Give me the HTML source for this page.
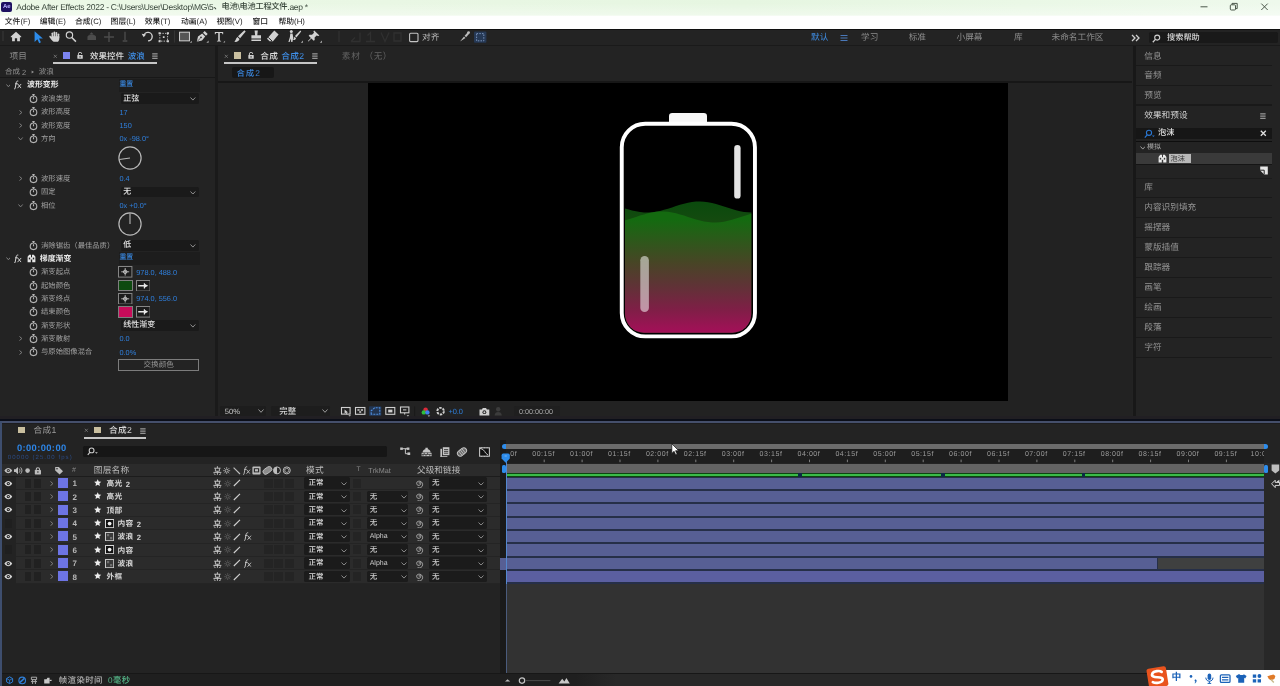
<!DOCTYPE html>
<html lang="zh"><head><meta charset="utf-8"><title>Adobe After Effects 2022</title><style>html,body{margin:0;padding:0}body{width:1280px;height:686px;overflow:hidden;position:relative;background:#232323;font-family:"Liberation Sans","Noto Sans CJK SC",sans-serif;font-size:8.67px}#app{position:absolute;left:0;top:0;width:1280px;height:686px;will-change:transform}.a{position:absolute;display:block}.t{position:absolute;display:block;white-space:pre;font-kerning:none;text-rendering:geometricPrecision}.m{font-weight:500}.b{font-weight:bold}</style></head>
<body>
<div id="app">
<div class="a" style="left:0px;top:0px;width:1280px;height:16px;background:linear-gradient(to right,#ebf8e6 0%,#e9f7e4 30%,#e6f6e1 58%,#eaf8e6 80%,#eef9ec 100%);"></div>
<div class="a" style="left:0px;top:0px;width:1280px;height:16px;background:linear-gradient(to bottom,rgba(255,255,255,0) 20%,rgba(255,255,255,0.35) 92%,rgba(255,255,255,0.7) 100%);"></div>
<div class="a" style="left:0px;top:16px;width:1280px;height:13px;background:#ffffff;"></div>
<div class="a" style="left:1.2px;top:2.1px;width:10.6px;height:10px;background:#1d1060;border-radius:2px"></div>
<span class="t" style="left:3.1px;top:4.17px;font-size:6px;color:#b9b4ff;line-height:6px;font-weight:bold;letter-spacing:-0.25px;">Ae</span>
<span class="t" style="left:16.3px;top:2.38px;font-size:8.5px;color:#38463a;line-height:10px;letter-spacing:-0.28px;">Adobe After Effects 2022 - C:\Users\User\Desktop\MG\5</span>
<span class="t m" style="left:213.57px;top:3.1px;font-size:8.24px;line-height:8.24px;color:#38463a;letter-spacing:-0.28px;">、电池</span>
<span class="t" style="left:237.46px;top:2.38px;font-size:8.5px;color:#38463a;line-height:10px;letter-spacing:-0.28px;">\</span>
<span class="t m" style="left:239.55px;top:3.1px;font-size:8.24px;line-height:8.24px;color:#38463a;letter-spacing:-0.28px;">电池工程文件</span>
<span class="t" style="left:287.34px;top:2.38px;font-size:8.5px;color:#38463a;line-height:10px;letter-spacing:-0.28px;">.aep *</span>
<svg class="a" style="left:1196px;top:0px;" width="80" height="15" viewBox="0 0 80 15"><g stroke="#4b574b" stroke-width="1" fill="none"><path d="M4.5 6.8h7"/><rect x="34.3" y="4.8" width="5.2" height="5.2" rx="1"/><path d="M36 4.8v-1.4h5.2v5.2h-1.6"/><path d="M65.3 3.6l6.4 6.4M71.7 3.6l-6.4 6.4"/></g></svg>
<span class="t m" style="left:4.8px;top:17.62px;font-size:7.8px;line-height:7.8px;color:#1c1c1c;">文件</span>
<span class="t" style="left:20.4px;top:17.42px;font-size:7.8px;color:#1c1c1c;line-height:9px;">(F)</span>
<span class="t m" style="left:39.8px;top:17.62px;font-size:7.8px;line-height:7.8px;color:#1c1c1c;">编辑</span>
<span class="t" style="left:55.4px;top:17.42px;font-size:7.8px;color:#1c1c1c;line-height:9px;">(E)</span>
<span class="t m" style="left:75px;top:17.62px;font-size:7.8px;line-height:7.8px;color:#1c1c1c;">合成</span>
<span class="t" style="left:90.6px;top:17.42px;font-size:7.8px;color:#1c1c1c;line-height:9px;">(C)</span>
<span class="t m" style="left:110.6px;top:17.62px;font-size:7.8px;line-height:7.8px;color:#1c1c1c;">图层</span>
<span class="t" style="left:126.2px;top:17.42px;font-size:7.8px;color:#1c1c1c;line-height:9px;">(L)</span>
<span class="t m" style="left:144.8px;top:17.62px;font-size:7.8px;line-height:7.8px;color:#1c1c1c;">效果</span>
<span class="t" style="left:160.4px;top:17.42px;font-size:7.8px;color:#1c1c1c;line-height:9px;">(T)</span>
<span class="t m" style="left:181px;top:17.62px;font-size:7.8px;line-height:7.8px;color:#1c1c1c;">动画</span>
<span class="t" style="left:196.6px;top:17.42px;font-size:7.8px;color:#1c1c1c;line-height:9px;">(A)</span>
<span class="t m" style="left:216.5px;top:17.62px;font-size:7.8px;line-height:7.8px;color:#1c1c1c;">视图</span>
<span class="t" style="left:232.1px;top:17.42px;font-size:7.8px;color:#1c1c1c;line-height:9px;">(V)</span>
<span class="t m" style="left:252.5px;top:17.62px;font-size:7.8px;line-height:7.8px;color:#1c1c1c;">窗口</span>
<span class="t m" style="left:278.5px;top:17.62px;font-size:7.8px;line-height:7.8px;color:#1c1c1c;">帮助</span>
<span class="t" style="left:294.1px;top:17.42px;font-size:7.8px;color:#1c1c1c;line-height:9px;">(H)</span>
<div class="a" style="left:0px;top:29px;width:1280px;height:657px;background:#232323;"></div>
<div class="a" style="left:0px;top:29px;width:1280px;height:1px;background:#101010;"></div>
<div class="a" style="left:0px;top:45.3px;width:1280px;height:1.2px;background:#1a1a1a;"></div>
<div class="a" style="left:215.4px;top:46px;width:2.8px;height:370px;background:#1a1a1a;"></div>
<div class="a" style="left:1132.6px;top:46px;width:3px;height:370px;background:#181818;"></div>
<div class="a" style="left:0px;top:77.3px;width:215px;height:1.2px;background:#181818;"></div>
<div class="a" style="left:218.3px;top:80.8px;width:914px;height:1.8px;background:#171717;"></div>
<div class="a" style="left:218.3px;top:82.6px;width:914px;height:333.5px;background:#222222;"></div>
<div class="a" style="left:368px;top:83px;width:640px;height:318px;background:#000000;"></div>
<div class="a" style="left:0px;top:415.8px;width:1280px;height:3.4px;background:#211f23;"></div>
<div class="a" style="left:0px;top:419px;width:1280px;height:2px;background:#0b0e18;"></div>
<div class="a" style="left:0px;top:420.8px;width:1280px;height:2.4px;background:#454f6b;"></div>
<div class="a" style="left:0px;top:423.2px;width:1280px;height:0.9px;background:#1c1c1e;"></div>
<div class="a" style="left:0px;top:421px;width:2.2px;height:265px;background:#3e4e6e;"></div>
<svg class="a" style="left:600px;top:100px;" width="180" height="250" viewBox="0 0 180 250"><defs><linearGradient id="lg" gradientUnits="userSpaceOnUse" x1="0" y1="120" x2="0" y2="233"><stop offset="0" stop-color="#146a10"/><stop offset="0.38" stop-color="#484526"/><stop offset="0.58" stop-color="#5f3336"/><stop offset="0.8" stop-color="#801e47"/><stop offset="1" stop-color="#a50f59"/></linearGradient><linearGradient id="lg2" gradientUnits="userSpaceOnUse" x1="0" y1="104" x2="0" y2="160"><stop offset="0" stop-color="#0b4a0d"/><stop offset="1" stop-color="#2a4a14"/></linearGradient><clipPath id="bc"><rect x="25" y="26" width="126.3" height="206.7" rx="19"/></clipPath></defs><rect x="69" y="12.9" width="38" height="12" rx="3.2" fill="#f7f7f7"/><g clip-path="url(#bc)"><path d="M24 108.1L28 109.34L32 110.45L36 111.37L40 112.04L44 112.42L48 112.49L52 112.25L56 111.7L60 110.89L64 109.86L68 108.67L72 107.38L76 106.07L80 104.81L84 103.67L88 102.73L92 102.03L96 101.61L100 101.5L104 101.71L108 102.21L112 102.99L116 104L120 105.18L124 106.46L128 107.77L132 109.04L136 110.19L140 111.16L144 111.9L148 112.35L152 112.5L152 234L24 234z" fill="url(#lg2)"/><path d="M24 120.56L28 119.46L32 118.22L36 116.92L40 115.62L44 114.39L48 113.32L52 112.46L56 111.85L60 111.54L64 111.54L68 111.85L72 112.46L76 113.32L80 114.39L84 115.62L88 116.92L92 118.22L96 119.46L100 120.56L104 121.45L108 122.09L112 122.44L116 122.48L120 122.2L124 121.63L128 120.8L132 119.75L136 118.54L140 117.25L144 115.94L148 114.69L152 113.57L152 234L24 234z" fill="url(#lg)"/></g><rect x="21.75" y="23.7" width="133.2" height="212.7" rx="23.5" fill="none" stroke="#ffffff" stroke-width="3.9"/><rect x="134.2" y="45.1" width="6.4" height="53.5" rx="3.2" fill="#e4e4e4"/><rect x="40.3" y="156" width="8.6" height="56" rx="4.3" fill="#ffffff" fill-opacity="0.52"/></svg>
<svg class="a" style="left:0px;top:27.3px;" width="500" height="18" viewBox="0 0 500 18"><path d="M3 4v10" stroke="#3a3a3a" stroke-width="1"/><g transform="translate(16 14.2) scale(0.87) translate(-16 -14.2)"><path d="M10 8.8l6-5.4l6 5.4v0.9h-1.5v4.6h-3.2v-3.4h-2.6v3.4h-3.2v-4.6h-1.5z" fill="#d2d2d2"/></g><g transform="translate(37.8 15.6) scale(0.89) translate(-37.8 -15.6)"><path d="M34.2 2.9v11.9l3.1-2.9l2.1 4.3l1.9-0.9l-2.1-4.2h4.3z" fill="#2d8ceb"/></g><g transform="translate(54.4 14.6) scale(0.92) translate(-54.4 -14.6)"><g fill="#d2d2d2"><rect x="51.3" y="4.6" width="1.8" height="6.4" rx="0.9"/><rect x="53.5" y="3.6" width="1.8" height="7.4" rx="0.9"/><rect x="55.7" y="4.2" width="1.8" height="6.8" rx="0.9"/><rect x="57.9" y="5.8" width="1.8" height="5.6" rx="0.9"/><path d="M51.3 8.8h8.4v2.8c0 1.4-0.7 2.4-1.3 3.2h-4.8c-1.3-1-3.6-3.5-4.6-5.3c-0.4-0.9 0.7-1.6 1.5-0.8l0.8 1z"/></g></g><g transform="translate(70.6 14.6) scale(0.88) translate(-70.6 -14.6)"><circle cx="69.3" cy="7.2" r="3.6" fill="none" stroke="#d2d2d2" stroke-width="1.3"/><path d="M72 10l4.6 4.6" stroke="#d2d2d2" stroke-width="1.7"/></g><g transform="translate(91.7 13) scale(0.9) translate(-91.7 -13)"><path d="M87 9.5c0-3 9.5-3 9.5 0v3.5h-9.5zM89 7l2.5-2.5l2.5 2.5" fill="#4c4c4c"/></g><g transform="translate(109 14.4) scale(0.9) translate(-109 -14.4)"><path d="M109 4v11M103.5 9.5h11" stroke="#4c4c4c" stroke-width="1.6"/></g><g transform="translate(125 14) scale(0.92) translate(-125 -14)"><path d="M125 4v9M122.5 14h5" stroke="#4c4c4c" stroke-width="1.5"/></g><g transform="translate(147 14.4) scale(0.92) translate(-147 -14.4)"><path d="M143.5 8.5a4.6 4.6 0 1 1 4.6 5.3" fill="none" stroke="#d2d2d2" stroke-width="1.5"/><path d="M141.2 6.2l2.2 3.6l2.6-3z" fill="#d2d2d2"/></g><g transform="translate(163.7 14.9) scale(0.86) translate(-163.7 -14.9)"><rect x="159.2" y="5" width="9" height="9" fill="none" stroke="#d2d2d2" stroke-width="1" stroke-dasharray="1.6 1.4"/></g><g transform="translate(163.7 14.9) scale(0.86) translate(-163.7 -14.9)"><path d="M157.7 3.6h2.4v2.4h-2.4zM167.4 3.6h2.4v2.4h-2.4zM157.7 13h2.4v2.4h-2.4zM167.4 13h2.4v2.4h-2.4zM162.7 8.4h2v2h-2z" fill="#d2d2d2"/></g><path d="M174.5 3.5v12" stroke="#343434" stroke-width="1"/><g transform="translate(184.5 14.2) scale(0.9) translate(-184.5 -14.2)"><rect x="179" y="4.2" width="11" height="9.6" fill="#555" stroke="#d2d2d2" stroke-width="1.1"/><path d="M192.6 13.6v2.2h-2.2z" fill="#aaa"/></g><path d="M196.8 14.8l1.2-5.2l4.2-3.2l3 3l-3.2 4.2zM203 5.7l1.7-1.7l3 3l-1.7 1.7z" fill="#d2d2d2"/><path d="M197.2 14.4l3.4-3.4" stroke="#232323" stroke-width="0.7"/><circle cx="201" cy="10.4" r="0.8" fill="#232323"/><path d="M208.6 13.6v2.2h-2.2z" fill="#aaa"/><g transform="translate(219 14.4) scale(0.87) translate(-219 -14.4)"><path d="M214.2 3.6h9.6v2.6h-0.8l-0.5-1.5h-2.6v8.8l1.5 0.4v0.7h-4.8v-0.7l1.5-0.4v-8.8h-2.6l-0.5 1.5h-0.8z" fill="#d2d2d2"/><path d="M226 13.6v2.2h-2.2z" fill="#aaa"/></g><path d="M244.4 3.2l1.3 1.3l-5.6 6.8l-2.1-2zM237.4 10.1l2.1 2c-0.4 2.2-2.8 3.2-5.2 2.7c1.5-0.8 1.2-3 3.1-4.7z" fill="#d2d2d2"/><path d="M254.6 3.4h3.2l-0.5 4.8h3.7v3.2h-9.6v-3.2h3.7zM251.4 12.4h9.6v1.6h-9.6z" fill="#d2d2d2"/><path d="M274.3 3.6l4.3 4l-5.6 6.6h-3.4l-2.6-2.4z" fill="#d2d2d2"/><path d="M268.2 10.4l3.8 3.6" stroke="#232323" stroke-width="1"/><circle cx="291.3" cy="4.6" r="1.5" fill="#d2d2d2"/><path d="M290.3 6.6h2.2l0.8 4l-0.9 4.5h-1.2l-0.3-3.6l-1.3 3.6h-1.2l1.5-5z" fill="#d2d2d2"/><path d="M300.4 3.6l0.8 0.8l-4.8 6l-1.4-1.4zM294.6 9.8l1.4 1.4c-0.3 1.4-1.6 2-3 1.8c0.9-0.6 0.6-2 1.6-3.2z" fill="#d2d2d2"/><path d="M303 13.6v2.2h-2.2z" fill="#aaa"/><path d="M314.2 3.4l5.2 5l-1.2 0.6l-1.6-0.6l-2 2.1l0.1 2.5l-1 0.7l-2.3-2.3l-3 3.2l-0.5-0.5l3-3.2l-2.2-2.2l0.8-1l2.5 0.1l2-2.1l-0.6-1.5z" fill="#d2d2d2"/><path d="M322 13.6v2.2h-2.2z" fill="#aaa"/><g fill="none" stroke="#303030" stroke-width="1.3"><path d="M339 4v11"/><path d="M351 14.5h9v-9M351 14.5l4-4"/><path d="M366 14.5h9M370.5 14.5v-9l-3 3"/><path d="M381 5.5l4 9l4-9"/><path d="M394 6h7v8h-7z"/></g><rect x="409.6" y="6.2" width="8.4" height="8.4" rx="1" fill="none" stroke="#c4c4c4" stroke-width="1.1"/><path d="M460 14.6l4-5l1.5 1.3zM464.6 8.8l3.2-3.6l1.6 1.4l-3.3 3.6z" fill="#bdbdbd"/><circle cx="468.6" cy="5.6" r="1.4" fill="#bdbdbd"/><rect x="474" y="4.6" width="12.4" height="11.2" rx="1" fill="#263955"/><rect x="476.6" y="6.6" width="7.2" height="7.2" fill="none" stroke="#7890b8" stroke-width="1" stroke-dasharray="1.5 1.2"/></svg>
<span class="t" style="left:422px;top:33.48px;font-size:8.67px;line-height:8.67px;color:#b9b9b9;">对齐</span>
<span class="t" style="left:811px;top:33.18px;font-size:8.67px;line-height:8.67px;color:#3f8fe8;">默认</span>
<svg class="a" style="left:839.5px;top:34px;" width="9" height="8" viewBox="0 0 9 8"><path d="M0.5 1.5h7M0.5 4h7M0.5 6.5h7" stroke="#4a78b8" stroke-width="1"/></svg>
<span class="t" style="left:861px;top:33.18px;font-size:8.67px;line-height:8.67px;color:#8d8d8d;">学习</span>
<span class="t" style="left:908.7px;top:33.18px;font-size:8.67px;line-height:8.67px;color:#8d8d8d;">标准</span>
<span class="t" style="left:956.5px;top:33.18px;font-size:8.67px;line-height:8.67px;color:#8d8d8d;">小屏幕</span>
<span class="t" style="left:1014px;top:33.18px;font-size:8.67px;line-height:8.67px;color:#8d8d8d;">库</span>
<span class="t" style="left:1051.5px;top:33.18px;font-size:8.67px;line-height:8.67px;color:#8d8d8d;">未命名工作区</span>
<svg class="a" style="left:1131px;top:33.5px;" width="10" height="8" viewBox="0 0 10 8"><path d="M1 1l3 3l-3 3M5 1l3 3l-3 3" fill="none" stroke="#d0d0d0" stroke-width="1.3"/></svg>
<div class="a" style="left:1148.5px;top:32.3px;width:129px;height:11px;background:#191919;border-radius:1.5px"></div>
<svg class="a" style="left:1152px;top:33.5px;" width="9" height="9" viewBox="0 0 9 9"><circle cx="5.2" cy="3.6" r="2.5" fill="none" stroke="#cfcfcf" stroke-width="1.1"/><path d="M3.4 5.4l-2.6 2.8" stroke="#cfcfcf" stroke-width="1.3"/></svg>
<span class="t m" style="left:1167px;top:33.62px;font-size:8.2px;line-height:8.2px;color:#d6d6d6;">搜索帮助</span>
<span class="t" style="left:9.6px;top:51.58px;font-size:8.67px;line-height:8.67px;color:#8b8b8b;">项目</span>
<svg class="a" style="left:52.8px;top:54.2px;" width="5" height="5" viewBox="0 0 5 5"><path d="M0.8 0.8l3 3M3.8 0.8l-3 3" stroke="#7c7c7c" stroke-width="0.8"/></svg>
<div class="a" style="left:63.4px;top:52.2px;width:7.1px;height:6.5px;background:#7c84ef;"></div>
<svg class="a" style="left:77.1px;top:52.1px;" width="6.1" height="7" viewBox="0 0 7 8"><path d="M1.6 3.6v-1.4a1.9 1.9 0 0 1 3.8 0" fill="none" stroke="#cfcfcf" stroke-width="1.1"/><rect x="0.4" y="3.4" width="6.2" height="4.4" rx="0.6" fill="#cfcfcf"/><rect x="2.9" y="4.8" width="1.2" height="1.6" fill="#232323"/></svg>
<span class="t m" style="left:90px;top:51.66px;font-size:8.5px;line-height:8.5px;color:#dedede;">效果控件</span>
<span class="t m" style="left:127.7px;top:51.66px;font-size:8.5px;line-height:8.5px;color:#3f8fe8;">波浪</span>
<svg class="a" style="left:151.9px;top:53.4px;" width="6" height="6.4" viewBox="0 0 6 6.4"><path d="M0.2 0.9h5.4M0.2 3.1h5.4M0.2 5.3h5.4" stroke="#bdbdbd" stroke-width="0.95"/></svg>
<div class="a" style="left:53.3px;top:62.4px;width:103.8px;height:1.35px;background:#c6c6c6;"></div>
<span class="t" style="left:4.9px;top:68.47px;font-size:7.5px;line-height:7.5px;color:#929292;">合成</span>
<span class="t" style="left:19.9px;top:68.02px;font-size:7.5px;color:#929292;line-height:9px;"> 2</span>
<svg class="a" style="left:31.4px;top:70.4px;" width="4" height="4" viewBox="0 0 4 4"><path d="M0.6 0.4l2.4 1.6l-2.4 1.6z" fill="#929292"/></svg>
<span class="t" style="left:38.8px;top:68.47px;font-size:7.5px;line-height:7.5px;color:#929292;">波浪</span>
<div class="a" style="left:119px;top:78.93px;width:80.5px;height:12.8px;background:#1d1d1d;"></div>
<svg class="a" style="left:5.6px;top:84.13px;" width="4.8" height="3.3" viewBox="0 0 4.8 3.3"><path d="M0.5 0.5l1.9 2.3l1.9 -2.3" fill="none" stroke="#808080" stroke-width="1.0"/></svg>
<svg class="a" style="left:14px;top:80.43px;" width="7.9" height="9.7" viewBox="0 0 9 11"><path d="M4.9 1.2c-1.6-0.3-2.2 0.7-2.4 2l-1.2 6.2c-0.1 0.7-0.5 0.9-1.2 0.8M1.3 4.3h3" fill="none" stroke="#e2e2e2" stroke-width="1.05"/><path d="M4.4 4.6l3.6 4.6M8.2 4.5l-4.2 4.8" stroke="#e2e2e2" stroke-width="1.0"/></svg>
<span class="t b" style="left:27px;top:81.3px;font-size:7.9px;line-height:7.9px;color:#e8e8e8;">波形变形</span>
<span class="t m" style="left:119.4px;top:81.81px;font-size:6.9px;line-height:6.9px;color:#3a8be6;">重置</span>
<svg class="a" style="left:29.1px;top:92.96px;" width="9" height="11" viewBox="0 0 9 11"><circle cx="4.5" cy="6.3" r="3.3" fill="none" stroke="#b4b4b4" stroke-width="1.1"/><path d="M3.3 1.5h2.4M4.5 1.5v1.6M4.5 6.3v-2" stroke="#b4b4b4" stroke-width="1.1" fill="none"/></svg>
<span class="t" style="left:41px;top:94.92px;font-size:7.33px;line-height:7.33px;color:#a2a2a2;">波浪类型</span>
<div class="a" style="left:120.5px;top:93.46px;width:78.3px;height:10.4px;background:#1a1a1a;border-radius:1.5px"></div>
<span class="t m" style="left:123.3px;top:94.58px;font-size:8px;line-height:8px;color:#e4e4e4;">正弦</span>
<svg class="a" style="left:189.8px;top:97.36px;" width="5.8" height="3.6" viewBox="0 0 5.8 3.6"><path d="M0.5 0.5l2.4 2.6l2.4 -2.6" fill="none" stroke="#909090" stroke-width="1.0"/></svg>
<svg class="a" style="left:18.8px;top:109.7px;" width="3.4" height="5" viewBox="0 0 3.4 5"><path d="M0.5 0.5l2.4 2l-2.4 2" fill="none" stroke="#808080" stroke-width="1.0"/></svg>
<svg class="a" style="left:29.1px;top:106.3px;" width="9" height="11" viewBox="0 0 9 11"><circle cx="4.5" cy="6.3" r="3.3" fill="none" stroke="#b4b4b4" stroke-width="1.1"/><path d="M3.3 1.5h2.4M4.5 1.5v1.6M4.5 6.3v-2" stroke="#b4b4b4" stroke-width="1.1" fill="none"/></svg>
<span class="t" style="left:41px;top:108.26px;font-size:7.33px;line-height:7.33px;color:#a2a2a2;">波形高度</span>
<span class="t" style="left:119.5px;top:107.65px;font-size:7.33px;color:#2f7fdc;line-height:9px;">17</span>
<svg class="a" style="left:18.8px;top:123.03px;" width="3.4" height="5" viewBox="0 0 3.4 5"><path d="M0.5 0.5l2.4 2l-2.4 2" fill="none" stroke="#808080" stroke-width="1.0"/></svg>
<svg class="a" style="left:29.1px;top:119.63px;" width="9" height="11" viewBox="0 0 9 11"><circle cx="4.5" cy="6.3" r="3.3" fill="none" stroke="#b4b4b4" stroke-width="1.1"/><path d="M3.3 1.5h2.4M4.5 1.5v1.6M4.5 6.3v-2" stroke="#b4b4b4" stroke-width="1.1" fill="none"/></svg>
<span class="t" style="left:41px;top:121.59px;font-size:7.33px;line-height:7.33px;color:#a2a2a2;">波形宽度</span>
<span class="t" style="left:119.5px;top:120.98px;font-size:7.33px;color:#2f7fdc;line-height:9px;">150</span>
<svg class="a" style="left:18.4px;top:137.36px;" width="5.2" height="3.4" viewBox="0 0 5.2 3.4"><path d="M0.5 0.5l2.1 2.4l2.1 -2.4" fill="none" stroke="#808080" stroke-width="1.0"/></svg>
<svg class="a" style="left:29.1px;top:132.96px;" width="9" height="11" viewBox="0 0 9 11"><circle cx="4.5" cy="6.3" r="3.3" fill="none" stroke="#b4b4b4" stroke-width="1.1"/><path d="M3.3 1.5h2.4M4.5 1.5v1.6M4.5 6.3v-2" stroke="#b4b4b4" stroke-width="1.1" fill="none"/></svg>
<span class="t" style="left:41px;top:134.92px;font-size:7.33px;line-height:7.33px;color:#a2a2a2;">方向</span>
<span class="t" style="left:119.5px;top:134.32px;font-size:7.33px;color:#2f7fdc;line-height:9px;">0x -98.0°</span>
<svg class="a" style="left:117.8px;top:145.6px;overflow:visible" width="24" height="24" viewBox="0 0 24 24"><circle cx="12" cy="12" r="11.1" fill="none" stroke="#b8b8b8" stroke-width="1.2"/><path d="M12 12L1.31 13.5" stroke="#b8b8b8" stroke-width="1.1"/></svg>
<svg class="a" style="left:18.8px;top:176.36px;" width="3.4" height="5" viewBox="0 0 3.4 5"><path d="M0.5 0.5l2.4 2l-2.4 2" fill="none" stroke="#808080" stroke-width="1.0"/></svg>
<svg class="a" style="left:29.1px;top:172.96px;" width="9" height="11" viewBox="0 0 9 11"><circle cx="4.5" cy="6.3" r="3.3" fill="none" stroke="#b4b4b4" stroke-width="1.1"/><path d="M3.3 1.5h2.4M4.5 1.5v1.6M4.5 6.3v-2" stroke="#b4b4b4" stroke-width="1.1" fill="none"/></svg>
<span class="t" style="left:41px;top:174.92px;font-size:7.33px;line-height:7.33px;color:#a2a2a2;">波形速度</span>
<span class="t" style="left:119.5px;top:174.31px;font-size:7.33px;color:#2f7fdc;line-height:9px;">0.4</span>
<svg class="a" style="left:29.1px;top:186.29px;" width="9" height="11" viewBox="0 0 9 11"><circle cx="4.5" cy="6.3" r="3.3" fill="none" stroke="#b4b4b4" stroke-width="1.1"/><path d="M3.3 1.5h2.4M4.5 1.5v1.6M4.5 6.3v-2" stroke="#b4b4b4" stroke-width="1.1" fill="none"/></svg>
<span class="t" style="left:41px;top:188.26px;font-size:7.33px;line-height:7.33px;color:#a2a2a2;">固定</span>
<div class="a" style="left:120.5px;top:186.79px;width:78.3px;height:10.4px;background:#1a1a1a;border-radius:1.5px"></div>
<span class="t m" style="left:123.3px;top:187.91px;font-size:8px;line-height:8px;color:#e4e4e4;">无</span>
<svg class="a" style="left:189.8px;top:190.69px;" width="5.8" height="3.6" viewBox="0 0 5.8 3.6"><path d="M0.5 0.5l2.4 2.6l2.4 -2.6" fill="none" stroke="#909090" stroke-width="1.0"/></svg>
<svg class="a" style="left:18.4px;top:204.03px;" width="5.2" height="3.4" viewBox="0 0 5.2 3.4"><path d="M0.5 0.5l2.1 2.4l2.1 -2.4" fill="none" stroke="#808080" stroke-width="1.0"/></svg>
<svg class="a" style="left:29.1px;top:199.63px;" width="9" height="11" viewBox="0 0 9 11"><circle cx="4.5" cy="6.3" r="3.3" fill="none" stroke="#b4b4b4" stroke-width="1.1"/><path d="M3.3 1.5h2.4M4.5 1.5v1.6M4.5 6.3v-2" stroke="#b4b4b4" stroke-width="1.1" fill="none"/></svg>
<span class="t" style="left:41px;top:201.59px;font-size:7.33px;line-height:7.33px;color:#a2a2a2;">相位</span>
<span class="t" style="left:119.5px;top:200.98px;font-size:7.33px;color:#2f7fdc;line-height:9px;">0x +0.0°</span>
<svg class="a" style="left:117.8px;top:212.3px;overflow:visible" width="24" height="24" viewBox="0 0 24 24"><circle cx="12" cy="12" r="11.1" fill="none" stroke="#b8b8b8" stroke-width="1.2"/><path d="M12 12L12 1.2" stroke="#b8b8b8" stroke-width="1.1"/></svg>
<svg class="a" style="left:29.1px;top:239.63px;" width="9" height="11" viewBox="0 0 9 11"><circle cx="4.5" cy="6.3" r="3.3" fill="none" stroke="#b4b4b4" stroke-width="1.1"/><path d="M3.3 1.5h2.4M4.5 1.5v1.6M4.5 6.3v-2" stroke="#b4b4b4" stroke-width="1.1" fill="none"/></svg>
<span class="t" style="left:41px;top:241.59px;font-size:7.33px;line-height:7.33px;color:#a2a2a2;">消除锯齿（最佳品质）</span>
<div class="a" style="left:120.5px;top:240.13px;width:78.3px;height:10.4px;background:#1a1a1a;border-radius:1.5px"></div>
<span class="t m" style="left:123.3px;top:241.25px;font-size:8px;line-height:8px;color:#e4e4e4;">低</span>
<svg class="a" style="left:189.8px;top:244.03px;" width="5.8" height="3.6" viewBox="0 0 5.8 3.6"><path d="M0.5 0.5l2.4 2.6l2.4 -2.6" fill="none" stroke="#909090" stroke-width="1.0"/></svg>
<div class="a" style="left:119px;top:252.26px;width:80.5px;height:12.8px;background:#1d1d1d;"></div>
<svg class="a" style="left:5.6px;top:257.46px;" width="4.8" height="3.3" viewBox="0 0 4.8 3.3"><path d="M0.5 0.5l1.9 2.3l1.9 -2.3" fill="none" stroke="#808080" stroke-width="1.0"/></svg>
<svg class="a" style="left:14px;top:253.76px;" width="7.9" height="9.7" viewBox="0 0 9 11"><path d="M4.9 1.2c-1.6-0.3-2.2 0.7-2.4 2l-1.2 6.2c-0.1 0.7-0.5 0.9-1.2 0.8M1.3 4.3h3" fill="none" stroke="#e2e2e2" stroke-width="1.05"/><path d="M4.4 4.6l3.6 4.6M8.2 4.5l-4.2 4.8" stroke="#e2e2e2" stroke-width="1.0"/></svg>
<svg class="a" style="left:27.4px;top:253.86px;" width="9" height="9" viewBox="0 0 9 9"><path d="M0.6 8.2v-5.4l1.6-2h1.8v2.4h1v-2.4h1.8l1.6 2v5.4h-3.2v-2.6h-1.4v2.6z" fill="#e6e6e6"/><rect x="1.8" y="3.6" width="1.4" height="1.8" fill="#232323"/><rect x="5.8" y="3.6" width="1.4" height="1.8" fill="#232323"/></svg>
<span class="t b" style="left:39.8px;top:254.63px;font-size:7.9px;line-height:7.9px;color:#e8e8e8;">梯度渐变</span>
<span class="t m" style="left:119.4px;top:255.14px;font-size:6.9px;line-height:6.9px;color:#3a8be6;">重置</span>
<svg class="a" style="left:29.1px;top:266.29px;" width="9" height="11" viewBox="0 0 9 11"><circle cx="4.5" cy="6.3" r="3.3" fill="none" stroke="#b4b4b4" stroke-width="1.1"/><path d="M3.3 1.5h2.4M4.5 1.5v1.6M4.5 6.3v-2" stroke="#b4b4b4" stroke-width="1.1" fill="none"/></svg>
<span class="t" style="left:41px;top:268.25px;font-size:7.33px;line-height:7.33px;color:#a2a2a2;">渐变起点</span>
<svg class="a" style="left:118.4px;top:266.19px;" width="14.4" height="11.6" viewBox="0 0 14.4 11.6"><rect x="0.5" y="0.5" width="13.4" height="10.6" fill="#1c1c1c" stroke="#858585" stroke-width="1"/><circle cx="7.2" cy="5.8" r="1.7" fill="none" stroke="#cfcfcf" stroke-width="0.9"/><path d="M7.2 2v7.6M3.2 5.8h8" stroke="#cfcfcf" stroke-width="0.8"/></svg>
<span class="t" style="left:136.3px;top:267.65px;font-size:7.33px;color:#2f7fdc;line-height:9px;">978.0, 488.0</span>
<svg class="a" style="left:29.1px;top:279.62px;" width="9" height="11" viewBox="0 0 9 11"><circle cx="4.5" cy="6.3" r="3.3" fill="none" stroke="#b4b4b4" stroke-width="1.1"/><path d="M3.3 1.5h2.4M4.5 1.5v1.6M4.5 6.3v-2" stroke="#b4b4b4" stroke-width="1.1" fill="none"/></svg>
<span class="t" style="left:41px;top:281.59px;font-size:7.33px;line-height:7.33px;color:#a2a2a2;">起始颜色</span>
<div class="a" style="left:118.4px;top:279.62px;width:14.4px;height:11.4px;background:#0e4a10;box-sizing:border-box;border:1px solid #7e7e7e"></div>
<svg class="a" style="left:135.6px;top:279.52px;" width="14.6" height="11.6" viewBox="0 0 14.6 11.6"><rect x="0.5" y="0.5" width="13.6" height="10.6" fill="#1c1c1c" stroke="#858585" stroke-width="1"/><path d="M2.2 5h6.4v-1.2l3.6 2l-3.6 2v-1.2h-6.4z" fill="#e8e8e8"/><path d="M8.4 3.2v5.2" stroke="#e8e8e8" stroke-width="1.2"/></svg>
<svg class="a" style="left:29.1px;top:292.96px;" width="9" height="11" viewBox="0 0 9 11"><circle cx="4.5" cy="6.3" r="3.3" fill="none" stroke="#b4b4b4" stroke-width="1.1"/><path d="M3.3 1.5h2.4M4.5 1.5v1.6M4.5 6.3v-2" stroke="#b4b4b4" stroke-width="1.1" fill="none"/></svg>
<span class="t" style="left:41px;top:294.92px;font-size:7.33px;line-height:7.33px;color:#a2a2a2;">渐变终点</span>
<svg class="a" style="left:118.4px;top:292.86px;" width="14.4" height="11.6" viewBox="0 0 14.4 11.6"><rect x="0.5" y="0.5" width="13.4" height="10.6" fill="#1c1c1c" stroke="#858585" stroke-width="1"/><circle cx="7.2" cy="5.8" r="1.7" fill="none" stroke="#cfcfcf" stroke-width="0.9"/><path d="M7.2 2v7.6M3.2 5.8h8" stroke="#cfcfcf" stroke-width="0.8"/></svg>
<span class="t" style="left:136.3px;top:294.31px;font-size:7.33px;color:#2f7fdc;line-height:9px;">974.0, 556.0</span>
<svg class="a" style="left:29.1px;top:306.29px;" width="9" height="11" viewBox="0 0 9 11"><circle cx="4.5" cy="6.3" r="3.3" fill="none" stroke="#b4b4b4" stroke-width="1.1"/><path d="M3.3 1.5h2.4M4.5 1.5v1.6M4.5 6.3v-2" stroke="#b4b4b4" stroke-width="1.1" fill="none"/></svg>
<span class="t" style="left:41px;top:308.25px;font-size:7.33px;line-height:7.33px;color:#a2a2a2;">结束颜色</span>
<div class="a" style="left:118.4px;top:306.29px;width:14.4px;height:11.4px;background:#c80c5a;box-sizing:border-box;border:1px solid #7e7e7e"></div>
<svg class="a" style="left:135.6px;top:306.19px;" width="14.6" height="11.6" viewBox="0 0 14.6 11.6"><rect x="0.5" y="0.5" width="13.6" height="10.6" fill="#1c1c1c" stroke="#858585" stroke-width="1"/><path d="M2.2 5h6.4v-1.2l3.6 2l-3.6 2v-1.2h-6.4z" fill="#e8e8e8"/><path d="M8.4 3.2v5.2" stroke="#e8e8e8" stroke-width="1.2"/></svg>
<svg class="a" style="left:29.1px;top:319.62px;" width="9" height="11" viewBox="0 0 9 11"><circle cx="4.5" cy="6.3" r="3.3" fill="none" stroke="#b4b4b4" stroke-width="1.1"/><path d="M3.3 1.5h2.4M4.5 1.5v1.6M4.5 6.3v-2" stroke="#b4b4b4" stroke-width="1.1" fill="none"/></svg>
<span class="t" style="left:41px;top:321.59px;font-size:7.33px;line-height:7.33px;color:#a2a2a2;">渐变形状</span>
<div class="a" style="left:120.5px;top:320.12px;width:78.3px;height:10.4px;background:#1a1a1a;border-radius:1.5px"></div>
<span class="t m" style="left:123.3px;top:321.24px;font-size:8px;line-height:8px;color:#e4e4e4;">线性渐变</span>
<svg class="a" style="left:189.8px;top:324.02px;" width="5.8" height="3.6" viewBox="0 0 5.8 3.6"><path d="M0.5 0.5l2.4 2.6l2.4 -2.6" fill="none" stroke="#909090" stroke-width="1.0"/></svg>
<svg class="a" style="left:18.8px;top:336.36px;" width="3.4" height="5" viewBox="0 0 3.4 5"><path d="M0.5 0.5l2.4 2l-2.4 2" fill="none" stroke="#808080" stroke-width="1.0"/></svg>
<svg class="a" style="left:29.1px;top:332.96px;" width="9" height="11" viewBox="0 0 9 11"><circle cx="4.5" cy="6.3" r="3.3" fill="none" stroke="#b4b4b4" stroke-width="1.1"/><path d="M3.3 1.5h2.4M4.5 1.5v1.6M4.5 6.3v-2" stroke="#b4b4b4" stroke-width="1.1" fill="none"/></svg>
<span class="t" style="left:41px;top:334.92px;font-size:7.33px;line-height:7.33px;color:#a2a2a2;">渐变散射</span>
<span class="t" style="left:119.5px;top:334.31px;font-size:7.33px;color:#2f7fdc;line-height:9px;">0.0</span>
<svg class="a" style="left:18.8px;top:349.69px;" width="3.4" height="5" viewBox="0 0 3.4 5"><path d="M0.5 0.5l2.4 2l-2.4 2" fill="none" stroke="#808080" stroke-width="1.0"/></svg>
<svg class="a" style="left:29.1px;top:346.29px;" width="9" height="11" viewBox="0 0 9 11"><circle cx="4.5" cy="6.3" r="3.3" fill="none" stroke="#b4b4b4" stroke-width="1.1"/><path d="M3.3 1.5h2.4M4.5 1.5v1.6M4.5 6.3v-2" stroke="#b4b4b4" stroke-width="1.1" fill="none"/></svg>
<span class="t" style="left:41px;top:348.25px;font-size:7.33px;line-height:7.33px;color:#a2a2a2;">与原始图像混合</span>
<span class="t" style="left:119.5px;top:347.64px;font-size:7.33px;color:#2f7fdc;line-height:9px;">0.0%</span>
<div class="a" style="left:118.4px;top:358.6px;width:80.6px;height:12px;background:transparent;box-sizing:border-box;border:1px solid #7c7c7c"></div>
<span class="t" style="left:143.5px;top:360.82px;font-size:7.6px;line-height:7.6px;color:#969696;">交换颜色</span>
<svg class="a" style="left:223.6px;top:54.2px;" width="5" height="5" viewBox="0 0 5 5"><path d="M0.8 0.8l3 3M3.8 0.8l-3 3" stroke="#7c7c7c" stroke-width="0.8"/></svg>
<div class="a" style="left:233.9px;top:52.2px;width:7.2px;height:6.8px;background:#c9bf9f;"></div>
<svg class="a" style="left:247.9px;top:52.1px;" width="6.1" height="7" viewBox="0 0 7 8"><path d="M1.6 3.6v-1.4a1.9 1.9 0 0 1 3.8 0" fill="none" stroke="#cfcfcf" stroke-width="1.1"/><rect x="0.4" y="3.4" width="6.2" height="4.4" rx="0.6" fill="#cfcfcf"/><rect x="2.9" y="4.8" width="1.2" height="1.6" fill="#232323"/></svg>
<span class="t m" style="left:260.2px;top:51.58px;font-size:8.67px;line-height:8.67px;color:#dedede;letter-spacing:0.3px;">合成</span>
<span class="t m" style="left:281.3px;top:51.58px;font-size:8.67px;line-height:8.67px;color:#3f8fe8;letter-spacing:0.3px;">合成</span>
<span class="t" style="left:299.24px;top:51.14px;font-size:8.67px;color:#3f8fe8;line-height:10px;letter-spacing:0.3px;">2</span>
<svg class="a" style="left:311.8px;top:53.4px;" width="6" height="6.4" viewBox="0 0 6 6.4"><path d="M0.2 0.9h5.4M0.2 3.1h5.4M0.2 5.3h5.4" stroke="#bdbdbd" stroke-width="0.95"/></svg>
<div class="a" style="left:224px;top:62.4px;width:93.3px;height:1.35px;background:#c6c6c6;"></div>
<span class="t" style="left:341.8px;top:51.58px;font-size:8.67px;line-height:8.67px;color:#636363;letter-spacing:0.9px;">素材</span>
<span class="t" style="left:364.6px;top:51.58px;font-size:8.67px;line-height:8.67px;color:#636363;letter-spacing:0.4px;">（无）</span>
<div class="a" style="left:231.5px;top:67.2px;width:42.5px;height:11.2px;background:#171717;border-radius:2px"></div>
<span class="t m" style="left:236.4px;top:68.62px;font-size:8.4px;line-height:8.4px;color:#3b86dc;letter-spacing:1px;">合成</span>
<span class="t" style="left:255.2px;top:67.94px;font-size:8.4px;color:#3b86dc;line-height:10px;letter-spacing:1px;">2</span>
<div class="a" style="left:220.2px;top:405.8px;width:45.6px;height:10.2px;background:#1d1d1d;border-radius:1.5px"></div>
<span class="t" style="left:224.8px;top:406.75px;font-size:7.6px;color:#c8c8c8;line-height:9px;">50%</span>
<svg class="a" style="left:258px;top:409.4px;" width="6" height="3.8" viewBox="0 0 6 3.8"><path d="M0.5 0.5l2.5 2.8l2.5 -2.8" fill="none" stroke="#9a9a9a" stroke-width="1.0"/></svg>
<div class="a" style="left:271px;top:405.8px;width:58.8px;height:10.2px;background:#1d1d1d;border-radius:1.5px"></div>
<span class="t m" style="left:279.3px;top:406.72px;font-size:8.4px;line-height:8.4px;color:#d8d8d8;">完整</span>
<svg class="a" style="left:322.3px;top:409.4px;" width="6" height="3.8" viewBox="0 0 6 3.8"><path d="M0.5 0.5l2.5 2.8l2.5 -2.8" fill="none" stroke="#9a9a9a" stroke-width="1.0"/></svg>
<svg class="a" style="left:340px;top:405.8px;" width="110" height="12" viewBox="0 0 110 12"><rect x="1.5" y="1.5" width="8.6" height="6.6" fill="none" stroke="#cfcfcf" stroke-width="1.1"/><path d="M4.6 3.4v4.4l1.2-1l0.9 1.8l0.8-0.4l-0.9-1.7h1.5z" fill="#cfcfcf"/><path d="M8.4 9.2h2.6l-1.3 1.4z" fill="#cfcfcf"/><rect x="15.5" y="1.5" width="9.4" height="6.8" fill="none" stroke="#cfcfcf" stroke-width="1.1"/><path d="M17.4 3h2.2v1.9h-2.2zM20.8 3h2.2v1.9h-2.2zM19.2 5h2v1.9h-2z" fill="#cfcfcf" fill-opacity="0.75"/><rect x="29" y="0.2" width="12.4" height="9.8" rx="1" fill="#22344f"/><path d="M31.2 8.2v-3.4l3.4-3h5.2v6.4z" fill="none" stroke="#4f8fe0" stroke-width="1.1" stroke-dasharray="2 1"/><rect x="45.8" y="1.5" width="9" height="6.8" fill="none" stroke="#cfcfcf" stroke-width="1.1"/><rect x="48.2" y="3.6" width="4.2" height="2.8" fill="#cfcfcf"/><rect x="60.5" y="1" width="8.4" height="5.8" fill="none" stroke="#cfcfcf" stroke-width="1.1"/><path d="M64.7 6.8v1.8M63 3.9h3.4" stroke="#cfcfcf" stroke-width="1"/><path d="M66.6 9.2h2.6l-1.3 1.4z" fill="#cfcfcf"/><path d="M74.6 0.5v9.6" stroke="#1a1a1a" stroke-width="1"/><circle cx="85.6" cy="3.6" r="2.2" fill="#d92a3a"/><circle cx="83.8" cy="6.4" r="2.2" fill="#2fbf3a"/><circle cx="87.4" cy="6.4" r="2.2" fill="#3f7ff0"/><path d="M87.6 9.4h2.6l-1.3 1.4z" fill="#cfcfcf"/><circle cx="100.6" cy="5.2" r="3.3" fill="none" stroke="#cfcfcf" stroke-width="1.9" stroke-dasharray="2.4 1.05"/></svg>
<span class="t" style="left:448.4px;top:406.68px;font-size:7.4px;color:#2f7fdc;line-height:9px;">+0.0</span>
<svg class="a" style="left:479.2px;top:406.6px;" width="11" height="9" viewBox="0 0 11 9"><path d="M0.5 2.4h2.4l0.9-1.4h3.2l0.9 1.4h2.4v6h-9.8z" fill="#cfcfcf"/><circle cx="5.4" cy="5.2" r="1.9" fill="#232323"/><circle cx="5.4" cy="5.2" r="1" fill="#cfcfcf"/></svg>
<svg class="a" style="left:494.2px;top:406.2px;" width="9" height="10" viewBox="0 0 9 10"><circle cx="4.2" cy="3.2" r="2.2" fill="#3c3c3c"/><path d="M0.6 9.4c0-4.6 7.2-4.6 7.2 0z" fill="#3c3c3c"/></svg>
<div class="a" style="left:513.5px;top:405.6px;width:46px;height:10.8px;background:#1f1f1f;border-radius:1.5px"></div>
<span class="t" style="left:519px;top:406.61px;font-size:7.2px;color:#a6a6a6;line-height:9px;">0:00:00:00</span>
<span class="t" style="left:1144.3px;top:51.58px;font-size:8.67px;line-height:8.67px;color:#949494;">信息</span>
<span class="t" style="left:1144.3px;top:71.18px;font-size:8.67px;line-height:8.67px;color:#949494;">音频</span>
<span class="t" style="left:1144.3px;top:90.98px;font-size:8.67px;line-height:8.67px;color:#949494;">预览</span>
<div class="a" style="left:1136px;top:64.6px;width:136px;height:1.3px;background:#191919;"></div>
<div class="a" style="left:1136px;top:84.6px;width:136px;height:1.3px;background:#191919;"></div>
<div class="a" style="left:1136px;top:104.4px;width:136px;height:1.3px;background:#191919;"></div>
<span class="t" style="left:1144.3px;top:111.18px;font-size:8.67px;line-height:8.67px;color:#cfcfcf;">效果和预设</span>
<svg class="a" style="left:1260.2px;top:113px;" width="6" height="6.4" viewBox="0 0 6 6.4"><path d="M0.2 0.9h5.4M0.2 3.1h5.4M0.2 5.3h5.4" stroke="#bdbdbd" stroke-width="0.95"/></svg>
<div class="a" style="left:1136px;top:127.6px;width:136px;height:11.8px;background:#161616;"></div>
<svg class="a" style="left:1143.6px;top:128.6px;" width="12" height="10" viewBox="0 0 12 10"><circle cx="5" cy="3.8" r="2.6" fill="none" stroke="#2a76d0" stroke-width="1.1"/><path d="M3.2 5.8l-2.4 2.8" stroke="#2a76d0" stroke-width="1.2"/><path d="M8 6.4h2.8l-1.4 1.6z" fill="#2a76d0"/></svg>
<span class="t m" style="left:1158px;top:129.22px;font-size:8.2px;line-height:8.2px;color:#e6e6e6;">泡沫</span>
<svg class="a" style="left:1260.4px;top:130.4px;" width="7" height="7" viewBox="0 0 7 7"><path d="M0.8 0.8l5 5M5.8 0.8l-5 5" stroke="#e0e0e0" stroke-width="1.3"/></svg>
<div class="a" style="left:1136px;top:140.8px;width:136px;height:1.6px;background:#0e0e0e;"></div>
<svg class="a" style="left:1139.6px;top:146.2px;" width="5.6" height="3.6" viewBox="0 0 5.6 3.6"><path d="M0.5 0.5l2.3 2.6l2.3 -2.6" fill="none" stroke="#a0a0a0" stroke-width="1.0"/></svg>
<span class="t" style="left:1147px;top:144.03px;font-size:7px;line-height:7px;color:#a8a8a8;">模拟</span>
<div class="a" style="left:1136px;top:153.4px;width:136px;height:10.4px;background:#3a3a3a;"></div>
<svg class="a" style="left:1158.4px;top:154.2px;" width="9" height="9" viewBox="0 0 9 9"><path d="M0.6 8.4v-5.4l1.6-2.2h1.8v2.4h1v-2.4h1.8l1.6 2.2v5.4h-3.2v-2.6h-1.4v2.6z" fill="#ececec"/><rect x="1.8" y="3.8" width="1.4" height="1.8" fill="#3a3a3a"/><rect x="5.8" y="3.8" width="1.4" height="1.8" fill="#3a3a3a"/></svg>
<div class="a" style="left:1169.3px;top:154.2px;width:21.4px;height:8.9px;background:#b9b9b9;"></div>
<span class="t" style="left:1170.6px;top:155.03px;font-size:7.2px;line-height:7.2px;color:#3c3c3c;">泡沫</span>
<div class="a" style="left:1136px;top:163.8px;width:136px;height:1.2px;background:#151515;"></div>
<svg class="a" style="left:1258.6px;top:166.4px;" width="10" height="9" viewBox="0 0 10 9"><path d="M1.2 0.6h7.6v7.8h-3.6l-4-4z" fill="#e6e6e6"/><path d="M1 4.2h4.2v4.2" fill="none" stroke="#232323" stroke-width="1"/></svg>
<div class="a" style="left:1136px;top:177.6px;width:136px;height:1.2px;background:#1b1b1b;"></div>
<span class="t" style="left:1144.3px;top:183.38px;font-size:8.67px;line-height:8.67px;color:#949494;">库</span>
<div class="a" style="left:1136px;top:197px;width:136px;height:1.3px;background:#191919;"></div>
<span class="t" style="left:1144.3px;top:203.38px;font-size:8.67px;line-height:8.67px;color:#949494;">内容识别填充</span>
<div class="a" style="left:1136px;top:217px;width:136px;height:1.3px;background:#191919;"></div>
<span class="t" style="left:1144.3px;top:223.38px;font-size:8.67px;line-height:8.67px;color:#949494;">摇摆器</span>
<div class="a" style="left:1136px;top:237px;width:136px;height:1.3px;background:#191919;"></div>
<span class="t" style="left:1144.3px;top:243.38px;font-size:8.67px;line-height:8.67px;color:#949494;">蒙版插值</span>
<div class="a" style="left:1136px;top:257px;width:136px;height:1.3px;background:#191919;"></div>
<span class="t" style="left:1144.3px;top:263.38px;font-size:8.67px;line-height:8.67px;color:#949494;">跟踪器</span>
<div class="a" style="left:1136px;top:277px;width:136px;height:1.3px;background:#191919;"></div>
<span class="t" style="left:1144.3px;top:283.38px;font-size:8.67px;line-height:8.67px;color:#949494;">画笔</span>
<div class="a" style="left:1136px;top:297px;width:136px;height:1.3px;background:#191919;"></div>
<span class="t" style="left:1144.3px;top:303.38px;font-size:8.67px;line-height:8.67px;color:#949494;">绘画</span>
<div class="a" style="left:1136px;top:317px;width:136px;height:1.3px;background:#191919;"></div>
<span class="t" style="left:1144.3px;top:323.38px;font-size:8.67px;line-height:8.67px;color:#949494;">段落</span>
<div class="a" style="left:1136px;top:337px;width:136px;height:1.3px;background:#191919;"></div>
<span class="t" style="left:1144.3px;top:343.38px;font-size:8.67px;line-height:8.67px;color:#949494;">字符</span>
<div class="a" style="left:1136px;top:357px;width:136px;height:1.3px;background:#191919;"></div>
<div class="a" style="left:17.7px;top:426.6px;width:7.3px;height:6.9px;background:#c9bf9f;"></div>
<span class="t" style="left:33.6px;top:425.78px;font-size:8.67px;line-height:8.67px;color:#9c9c9c;letter-spacing:0.3px;">合成</span>
<span class="t" style="left:51.54px;top:425.34px;font-size:8.67px;color:#9c9c9c;line-height:10px;letter-spacing:0.3px;">1</span>
<svg class="a" style="left:83.6px;top:428.2px;" width="5" height="5" viewBox="0 0 5 5"><path d="M0.8 0.8l3 3M3.8 0.8l-3 3" stroke="#7c7c7c" stroke-width="0.8"/></svg>
<div class="a" style="left:93.7px;top:426.6px;width:7.2px;height:6.9px;background:#c9bf9f;"></div>
<span class="t m" style="left:109px;top:425.78px;font-size:8.67px;line-height:8.67px;color:#d6d6d6;letter-spacing:0.3px;">合成</span>
<span class="t" style="left:126.94px;top:425.34px;font-size:8.67px;color:#d6d6d6;line-height:10px;letter-spacing:0.3px;">2</span>
<svg class="a" style="left:140.4px;top:427.6px;" width="6" height="6.4" viewBox="0 0 6 6.4"><path d="M0.2 0.9h5.4M0.2 3.1h5.4M0.2 5.3h5.4" stroke="#bdbdbd" stroke-width="0.95"/></svg>
<div class="a" style="left:84px;top:437.2px;width:62.4px;height:1.45px;background:#c6c6c6;"></div>
<span class="t" style="left:16.9px;top:442.87px;font-size:9.3px;color:#2d86e8;line-height:10px;font-weight:bold;letter-spacing:0.42px;">0:00:00:00</span>
<span class="t" style="left:7.8px;top:454.77px;font-size:6px;color:#2b4a82;line-height:6px;letter-spacing:1.05px;">00000 (25.00 fps)</span>
<div class="a" style="left:82.5px;top:445.7px;width:304.5px;height:11.4px;background:#161616;border-radius:1.5px"></div>
<svg class="a" style="left:87px;top:447.2px;" width="12" height="9" viewBox="0 0 12 9"><circle cx="4.6" cy="3.4" r="2.4" fill="none" stroke="#c8c8c8" stroke-width="1.1"/><path d="M3 5.2l-2.2 2.6" stroke="#c8c8c8" stroke-width="1.2"/><path d="M8 5.2h2.8l-1.4 1.6z" fill="#c8c8c8"/></svg>
<svg class="a" style="left:400px;top:447px;" width="92" height="11" viewBox="0 0 92 11"><path d="M1.4 1.7h6.2M5.4 1.7v5h2.4" fill="none" stroke="#c4c4c4" stroke-width="1"/><rect x="0.2" y="0.5" width="2.6" height="2.4" fill="#c4c4c4"/><rect x="6.6" y="0.5" width="2.8" height="2.4" fill="#c4c4c4"/><rect x="7.4" y="5.4" width="2.8" height="2.6" fill="#c4c4c4"/><path d="M22.6 5.4c0-2 1.6-3.4 4-3.4s4 1.4 4 3.4zM25.4 0.8h2.4v1.4h-2.4z" fill="#c4c4c4"/><path d="M21.6 5.8h10v3.4h-10z" fill="#c4c4c4"/><path d="M21.6 7.4h10M24.2 5.8v1.6M27.6 5.8v1.6M29.8 7.4v1.8M26 7.4v1.8M23 7.4v1.8" stroke="#232323" stroke-width="0.7"/><rect x="40.4" y="1.8" width="1.6" height="8" fill="#c4c4c4"/><path d="M40.4 9h7v0.8h-7z" fill="#c4c4c4"/><rect x="42.8" y="0.2" width="6.6" height="8" fill="#c4c4c4"/><path d="M44 2.6h4.2M44 4.4h4.2M44 6.2h4.2" stroke="#232323" stroke-width="0.8"/><g transform="rotate(-38 62 5)"><rect x="57" y="2.2" width="10" height="5.6" rx="2.8" fill="#6a6a6a" stroke="#c4c4c4" stroke-width="1"/><path d="M60 2.2v5.6M62 2.2v5.6M64 2.2v5.6" stroke="#c4c4c4" stroke-width="0.8"/></g><rect x="79.6" y="0.8" width="9.8" height="8.4" fill="#111" stroke="#c4c4c4" stroke-width="1.1"/><path d="M80 1.4c3 0.4 4.6 2.6 5.6 4.6l2.4 2" fill="none" stroke="#c4c4c4" stroke-width="1"/><path d="M81.6 0.2v1M84.4 0.2v1M87.2 0.2v1M81.6 9v1M84.4 9v1M87.2 9v1" stroke="#c4c4c4" stroke-width="0.8"/></svg>
<div class="a" style="left:0px;top:463.6px;width:500px;height:12.8px;background:#2b2b2b;"></div>
<svg class="a" style="left:4.4px;top:465.5px;" width="62" height="10" viewBox="0 0 62 10"><path d="M0.4 4.6c2-3.6 5.8-3.6 7.8 0c-2 3.6-5.8 3.6-7.8 0z" fill="#bdbdbd"/><circle cx="4.3" cy="4.6" r="1.5" fill="#2b2b2b"/><circle cx="4.3" cy="4.6" r="0.7" fill="#bdbdbd"/><path d="M10 3.2h1.6l2.4-2.2v7.2l-2.4-2.2h-1.6z" fill="#bdbdbd"/><path d="M15.2 2.6c1 1.2 1 2.8 0 4M16.6 1.4c1.8 2 1.8 4.4 0 6.4" fill="none" stroke="#bdbdbd" stroke-width="0.9"/><circle cx="23.6" cy="4.6" r="2.3" fill="#bdbdbd"/><path d="M32.2 4.4v-1a1.7 1.7 0 0 1 3.4 0v1" fill="none" stroke="#bdbdbd" stroke-width="1.1"/><rect x="30.8" y="4" width="6.2" height="4.4" rx="0.6" fill="#bdbdbd"/><rect x="33.4" y="5.2" width="1" height="1.6" fill="#2b2b2b"/><path d="M51.2 1h3.6l4.2 4.2l-3.4 3.4l-4.4-4.2z" fill="#bdbdbd"/><circle cx="53" cy="2.8" r="0.8" fill="#2b2b2b"/></svg>
<span class="t" style="left:72px;top:466.63px;font-size:7px;color:#8c8c8c;line-height:7px;">#</span>
<span class="t" style="left:93.8px;top:465.68px;font-size:8.67px;line-height:8.67px;color:#bdbdbd;letter-spacing:0.25px;">图层名称</span>
<svg class="a" style="left:212.8px;top:465.7px;" width="9" height="9" viewBox="0 0 9 9"><path d="M4.4 0.2v2M1.2 2.2h6.4M2.4 2.2v3h4v-3M0.4 6.4h8M4.4 5.2v3.6M2.6 8.8l-1.8-1.2M6.2 8.8l1.8-1.2" fill="none" stroke="#bdbdbd" stroke-width="0.95"/></svg>
<svg class="a" style="left:223.4px;top:466.5px;" width="7.4" height="7.4" viewBox="0 0 7.4 7.4"><circle cx="3.7" cy="3.7" r="1.5" fill="none" stroke="#bdbdbd" stroke-width="0.9"/><path d="M3.7 0.2v1.4M3.7 5.8v1.4M0.2 3.7h1.4M5.8 3.7h1.4M1.2 1.2l1 1M5.2 5.2l1 1M6.2 1.2l-1 1M1.2 6.2l1-1" stroke="#bdbdbd" stroke-width="0.8"/></svg>
<svg class="a" style="left:233.4px;top:466.5px;" width="8" height="8" viewBox="0 0 8 8"><path d="M0.6 0.6l6.4 6.4" stroke="#bdbdbd" stroke-width="1.1"/></svg>
<svg class="a" style="left:243.4px;top:465.7px;" width="8" height="9" viewBox="0 0 8 9"><path d="M4.2 0.8c-1.4-0.2-1.9 0.6-2.1 1.7l-1 5.2c-0.1 0.6-0.4 0.8-1 0.7M1 3.4h2.6" fill="none" stroke="#bdbdbd" stroke-width="0.95"/><path d="M3.8 3.8l3 3.8M7 3.7l-3.5 4" stroke="#bdbdbd" stroke-width="0.9"/></svg>
<svg class="a" style="left:252.4px;top:465.9px;" width="40" height="9" viewBox="0 0 40 9"><rect x="0.4" y="0.4" width="8.2" height="8" rx="1" fill="#bdbdbd"/><rect x="1.8" y="2.2" width="5.4" height="4.2" fill="#2b2b2b"/><rect x="3" y="3.2" width="3" height="2.2" fill="#bdbdbd"/><g transform="rotate(-35 15.4 4.4)"><rect x="10.6" y="1.8" width="9.6" height="5.2" rx="2.6" fill="#8c8c8c" stroke="#bdbdbd" stroke-width="0.9"/></g><circle cx="25" cy="4.4" r="3.5" fill="none" stroke="#bdbdbd" stroke-width="1"/><path d="M25 0.9a3.5 3.5 0 0 0 0 7z" fill="#bdbdbd"/><circle cx="34.8" cy="4.4" r="3.5" fill="none" stroke="#bdbdbd" stroke-width="1"/><path d="M34.8 2.2l2 1.1v2.2l-2 1.1l-2-1.1v-2.2z" fill="none" stroke="#bdbdbd" stroke-width="0.8"/></svg>
<span class="t" style="left:306px;top:465.68px;font-size:8.67px;line-height:8.67px;color:#bdbdbd;letter-spacing:0.4px;">模式</span>
<span class="t" style="left:356.4px;top:466.49px;font-size:6.6px;color:#8a8a8a;line-height:7px;">T</span>
<span class="t" style="left:368.3px;top:465.71px;font-size:7.2px;color:#8a8a8a;line-height:9px;">TrkMat</span>
<span class="t" style="left:417px;top:465.68px;font-size:8.67px;line-height:8.67px;color:#bdbdbd;">父级和链接</span>
<div class="a" style="left:15.6px;top:476.4px;width:484px;height:107.2px;background:#2b2b2b;"></div>
<div class="a" style="left:0px;top:476.2px;width:499.6px;height:1.1px;background:#1c1c1c;"></div>
<div class="a" style="left:15.6px;top:489.3px;width:484px;height:0.9px;background:#242424;"></div>
<svg class="a" style="left:4.4px;top:478.5px;" width="9" height="9" viewBox="0 0 9 9"><path d="M0.4 4.6c2-3.6 5.8-3.6 7.8 0c-2 3.6-5.8 3.6-7.8 0z" fill="#d2d2d2"/><circle cx="4.3" cy="4.6" r="1.6" fill="#1c1c1c"/><circle cx="4.3" cy="4.6" r="0.7" fill="#d2d2d2"/></svg>
<div class="a" style="left:24.6px;top:478.5px;width:6.8px;height:9.2px;background:#212121;"></div>
<div class="a" style="left:34px;top:478.5px;width:6.8px;height:9.2px;background:#212121;"></div>
<svg class="a" style="left:50px;top:480.8px;" width="3.4" height="5.2" viewBox="0 0 3.4 5.2"><path d="M0.5 0.5l2.4 2.1l-2.4 2.1" fill="none" stroke="#808080" stroke-width="1.0"/></svg>
<div class="a" style="left:57.8px;top:477.9px;width:10.1px;height:10.2px;background:#6d74e4;"></div>
<span class="t" style="left:72.4px;top:479.2px;font-size:8px;color:#b6b6b6;line-height:9px;font-weight:bold;">1</span>
<svg class="a" style="left:93.6px;top:478.9px;" width="8" height="8" viewBox="0 0 8 8"><path d="M3.7 0.2l1.05 2.3l2.5 0.3l-1.85 1.7l0.5 2.5l-2.2-1.25l-2.2 1.25l0.5-2.5l-1.85-1.7l2.5-0.3z" fill="#ececec"/></svg>
<span class="t b" style="left:106.5px;top:480.07px;font-size:7.7px;line-height:7.7px;color:#d4d4d4;letter-spacing:0.2px;">高光</span>
<span class="t" style="left:125.7px;top:479.79px;font-size:7.7px;color:#d4d4d4;line-height:9px;font-weight:bold;">2</span>
<svg class="a" style="left:212.8px;top:478.7px;" width="9" height="9" viewBox="0 0 9 9"><path d="M4.4 0.2v2M1.2 2.2h6.4M2.4 2.2v3h4v-3M0.4 6.4h8M4.4 5.2v3.6M2.6 8.8l-1.8-1.2M6.2 8.8l1.8-1.2" fill="none" stroke="#c8c8c8" stroke-width="0.95"/></svg>
<svg class="a" style="left:224px;top:479.5px;" width="7.4" height="7.4" viewBox="0 0 7.4 7.4"><circle cx="3.7" cy="3.7" r="1.5" fill="none" stroke="#5c5c5c" stroke-width="0.9"/><path d="M3.7 0.2v1.4M3.7 5.8v1.4M0.2 3.7h1.4M5.8 3.7h1.4M1.2 1.2l1 1M5.2 5.2l1 1M6.2 1.2l-1 1M1.2 6.2l1-1" stroke="#5c5c5c" stroke-width="0.8"/></svg>
<svg class="a" style="left:233.4px;top:479.3px;" width="8" height="8" viewBox="0 0 8 8"><path d="M0.8 7l6.2-6.2" stroke="#d0d0d0" stroke-width="1.1"/></svg>
<div class="a" style="left:263.5px;top:478.5px;width:9.4px;height:9.2px;background:#242424;"></div>
<div class="a" style="left:274px;top:478.5px;width:9.4px;height:9.2px;background:#242424;"></div>
<div class="a" style="left:284.5px;top:478.5px;width:9.4px;height:9.2px;background:#242424;"></div>
<div class="a" style="left:303.9px;top:477.4px;width:45.9px;height:11.4px;background:#1b1b1b;border-radius:1.5px"></div>
<span class="t m" style="left:308.4px;top:479.48px;font-size:7.5px;line-height:7.5px;color:#dcdcdc;">正常</span>
<svg class="a" style="left:341px;top:481.9px;" width="6" height="3.6" viewBox="0 0 6 3.6"><path d="M0.5 0.5l2.5 2.6l2.5 -2.6" fill="none" stroke="#8a8a8a" stroke-width="1.0"/></svg>
<div class="a" style="left:352.6px;top:478.5px;width:8.4px;height:9.2px;background:#242424;"></div>
<svg class="a" style="left:415.4px;top:478.7px;" width="9" height="9" viewBox="0 0 9 9"><path d="M4.6 4.8a0.9 0.9 0 1 1 1.2-0.9a2.1 2.1 0 1 1-2.6-1.6a3.4 3.4 0 1 1 -0.6 6.2" fill="none" stroke="#a8a8a8" stroke-width="0.9"/></svg>
<div class="a" style="left:429px;top:477.4px;width:57.7px;height:11.4px;background:#1b1b1b;border-radius:1.5px"></div>
<span class="t m" style="left:431.9px;top:479.48px;font-size:7.5px;line-height:7.5px;color:#cfcfcf;">无</span>
<svg class="a" style="left:478.2px;top:481.9px;" width="6" height="3.6" viewBox="0 0 6 3.6"><path d="M0.5 0.5l2.5 2.6l2.5 -2.6" fill="none" stroke="#8a8a8a" stroke-width="1.0"/></svg>
<div class="a" style="left:15.6px;top:502.63px;width:484px;height:0.9px;background:#242424;"></div>
<svg class="a" style="left:4.4px;top:491.83px;" width="9" height="9" viewBox="0 0 9 9"><path d="M0.4 4.6c2-3.6 5.8-3.6 7.8 0c-2 3.6-5.8 3.6-7.8 0z" fill="#d2d2d2"/><circle cx="4.3" cy="4.6" r="1.6" fill="#1c1c1c"/><circle cx="4.3" cy="4.6" r="0.7" fill="#d2d2d2"/></svg>
<div class="a" style="left:24.6px;top:491.83px;width:6.8px;height:9.2px;background:#212121;"></div>
<div class="a" style="left:34px;top:491.83px;width:6.8px;height:9.2px;background:#212121;"></div>
<svg class="a" style="left:50px;top:494.13px;" width="3.4" height="5.2" viewBox="0 0 3.4 5.2"><path d="M0.5 0.5l2.4 2.1l-2.4 2.1" fill="none" stroke="#808080" stroke-width="1.0"/></svg>
<div class="a" style="left:57.8px;top:491.23px;width:10.1px;height:10.2px;background:#6d74e4;"></div>
<span class="t" style="left:72.4px;top:492.53px;font-size:8px;color:#b6b6b6;line-height:9px;font-weight:bold;">2</span>
<svg class="a" style="left:93.6px;top:492.23px;" width="8" height="8" viewBox="0 0 8 8"><path d="M3.7 0.2l1.05 2.3l2.5 0.3l-1.85 1.7l0.5 2.5l-2.2-1.25l-2.2 1.25l0.5-2.5l-1.85-1.7l2.5-0.3z" fill="#ececec"/></svg>
<span class="t b" style="left:106.5px;top:493.41px;font-size:7.7px;line-height:7.7px;color:#d4d4d4;letter-spacing:0.2px;">高光</span>
<svg class="a" style="left:212.8px;top:492.03px;" width="9" height="9" viewBox="0 0 9 9"><path d="M4.4 0.2v2M1.2 2.2h6.4M2.4 2.2v3h4v-3M0.4 6.4h8M4.4 5.2v3.6M2.6 8.8l-1.8-1.2M6.2 8.8l1.8-1.2" fill="none" stroke="#c8c8c8" stroke-width="0.95"/></svg>
<svg class="a" style="left:224px;top:492.83px;" width="7.4" height="7.4" viewBox="0 0 7.4 7.4"><circle cx="3.7" cy="3.7" r="1.5" fill="none" stroke="#5c5c5c" stroke-width="0.9"/><path d="M3.7 0.2v1.4M3.7 5.8v1.4M0.2 3.7h1.4M5.8 3.7h1.4M1.2 1.2l1 1M5.2 5.2l1 1M6.2 1.2l-1 1M1.2 6.2l1-1" stroke="#5c5c5c" stroke-width="0.8"/></svg>
<svg class="a" style="left:233.4px;top:492.63px;" width="8" height="8" viewBox="0 0 8 8"><path d="M0.8 7l6.2-6.2" stroke="#d0d0d0" stroke-width="1.1"/></svg>
<div class="a" style="left:263.5px;top:491.83px;width:9.4px;height:9.2px;background:#242424;"></div>
<div class="a" style="left:274px;top:491.83px;width:9.4px;height:9.2px;background:#242424;"></div>
<div class="a" style="left:284.5px;top:491.83px;width:9.4px;height:9.2px;background:#242424;"></div>
<div class="a" style="left:303.9px;top:490.73px;width:45.9px;height:11.4px;background:#1b1b1b;border-radius:1.5px"></div>
<span class="t m" style="left:308.4px;top:492.81px;font-size:7.5px;line-height:7.5px;color:#dcdcdc;">正常</span>
<svg class="a" style="left:341px;top:495.23px;" width="6" height="3.6" viewBox="0 0 6 3.6"><path d="M0.5 0.5l2.5 2.6l2.5 -2.6" fill="none" stroke="#8a8a8a" stroke-width="1.0"/></svg>
<div class="a" style="left:352.6px;top:491.83px;width:8.4px;height:9.2px;background:#242424;"></div>
<div class="a" style="left:367.2px;top:490.73px;width:40.8px;height:11.4px;background:#1b1b1b;border-radius:1.5px"></div>
<span class="t m" style="left:369.7px;top:492.81px;font-size:7.5px;line-height:7.5px;color:#cfcfcf;">无</span>
<svg class="a" style="left:400.8px;top:495.23px;" width="6" height="3.6" viewBox="0 0 6 3.6"><path d="M0.5 0.5l2.5 2.6l2.5 -2.6" fill="none" stroke="#8a8a8a" stroke-width="1.0"/></svg>
<svg class="a" style="left:415.4px;top:492.03px;" width="9" height="9" viewBox="0 0 9 9"><path d="M4.6 4.8a0.9 0.9 0 1 1 1.2-0.9a2.1 2.1 0 1 1-2.6-1.6a3.4 3.4 0 1 1 -0.6 6.2" fill="none" stroke="#a8a8a8" stroke-width="0.9"/></svg>
<div class="a" style="left:429px;top:490.73px;width:57.7px;height:11.4px;background:#1b1b1b;border-radius:1.5px"></div>
<span class="t m" style="left:431.9px;top:492.81px;font-size:7.5px;line-height:7.5px;color:#cfcfcf;">无</span>
<svg class="a" style="left:478.2px;top:495.23px;" width="6" height="3.6" viewBox="0 0 6 3.6"><path d="M0.5 0.5l2.5 2.6l2.5 -2.6" fill="none" stroke="#8a8a8a" stroke-width="1.0"/></svg>
<div class="a" style="left:15.6px;top:515.97px;width:484px;height:0.9px;background:#242424;"></div>
<svg class="a" style="left:4.4px;top:505.17px;" width="9" height="9" viewBox="0 0 9 9"><path d="M0.4 4.6c2-3.6 5.8-3.6 7.8 0c-2 3.6-5.8 3.6-7.8 0z" fill="#d2d2d2"/><circle cx="4.3" cy="4.6" r="1.6" fill="#1c1c1c"/><circle cx="4.3" cy="4.6" r="0.7" fill="#d2d2d2"/></svg>
<div class="a" style="left:24.6px;top:505.17px;width:6.8px;height:9.2px;background:#212121;"></div>
<div class="a" style="left:34px;top:505.17px;width:6.8px;height:9.2px;background:#212121;"></div>
<svg class="a" style="left:50px;top:507.47px;" width="3.4" height="5.2" viewBox="0 0 3.4 5.2"><path d="M0.5 0.5l2.4 2.1l-2.4 2.1" fill="none" stroke="#808080" stroke-width="1.0"/></svg>
<div class="a" style="left:57.8px;top:504.57px;width:10.1px;height:10.2px;background:#6d74e4;"></div>
<span class="t" style="left:72.4px;top:505.86px;font-size:8px;color:#b6b6b6;line-height:9px;font-weight:bold;">3</span>
<svg class="a" style="left:93.6px;top:505.57px;" width="8" height="8" viewBox="0 0 8 8"><path d="M3.7 0.2l1.05 2.3l2.5 0.3l-1.85 1.7l0.5 2.5l-2.2-1.25l-2.2 1.25l0.5-2.5l-1.85-1.7l2.5-0.3z" fill="#ececec"/></svg>
<span class="t b" style="left:106.5px;top:506.74px;font-size:7.7px;line-height:7.7px;color:#d4d4d4;letter-spacing:0.2px;">顶部</span>
<svg class="a" style="left:212.8px;top:505.37px;" width="9" height="9" viewBox="0 0 9 9"><path d="M4.4 0.2v2M1.2 2.2h6.4M2.4 2.2v3h4v-3M0.4 6.4h8M4.4 5.2v3.6M2.6 8.8l-1.8-1.2M6.2 8.8l1.8-1.2" fill="none" stroke="#c8c8c8" stroke-width="0.95"/></svg>
<svg class="a" style="left:224px;top:506.17px;" width="7.4" height="7.4" viewBox="0 0 7.4 7.4"><circle cx="3.7" cy="3.7" r="1.5" fill="none" stroke="#5c5c5c" stroke-width="0.9"/><path d="M3.7 0.2v1.4M3.7 5.8v1.4M0.2 3.7h1.4M5.8 3.7h1.4M1.2 1.2l1 1M5.2 5.2l1 1M6.2 1.2l-1 1M1.2 6.2l1-1" stroke="#5c5c5c" stroke-width="0.8"/></svg>
<svg class="a" style="left:233.4px;top:505.97px;" width="8" height="8" viewBox="0 0 8 8"><path d="M0.8 7l6.2-6.2" stroke="#d0d0d0" stroke-width="1.1"/></svg>
<div class="a" style="left:263.5px;top:505.17px;width:9.4px;height:9.2px;background:#242424;"></div>
<div class="a" style="left:274px;top:505.17px;width:9.4px;height:9.2px;background:#242424;"></div>
<div class="a" style="left:284.5px;top:505.17px;width:9.4px;height:9.2px;background:#242424;"></div>
<div class="a" style="left:303.9px;top:504.07px;width:45.9px;height:11.4px;background:#1b1b1b;border-radius:1.5px"></div>
<span class="t m" style="left:308.4px;top:506.14px;font-size:7.5px;line-height:7.5px;color:#dcdcdc;">正常</span>
<svg class="a" style="left:341px;top:508.57px;" width="6" height="3.6" viewBox="0 0 6 3.6"><path d="M0.5 0.5l2.5 2.6l2.5 -2.6" fill="none" stroke="#8a8a8a" stroke-width="1.0"/></svg>
<div class="a" style="left:352.6px;top:505.17px;width:8.4px;height:9.2px;background:#242424;"></div>
<div class="a" style="left:367.2px;top:504.07px;width:40.8px;height:11.4px;background:#1b1b1b;border-radius:1.5px"></div>
<span class="t m" style="left:369.7px;top:506.14px;font-size:7.5px;line-height:7.5px;color:#cfcfcf;">无</span>
<svg class="a" style="left:400.8px;top:508.57px;" width="6" height="3.6" viewBox="0 0 6 3.6"><path d="M0.5 0.5l2.5 2.6l2.5 -2.6" fill="none" stroke="#8a8a8a" stroke-width="1.0"/></svg>
<svg class="a" style="left:415.4px;top:505.37px;" width="9" height="9" viewBox="0 0 9 9"><path d="M4.6 4.8a0.9 0.9 0 1 1 1.2-0.9a2.1 2.1 0 1 1-2.6-1.6a3.4 3.4 0 1 1 -0.6 6.2" fill="none" stroke="#a8a8a8" stroke-width="0.9"/></svg>
<div class="a" style="left:429px;top:504.07px;width:57.7px;height:11.4px;background:#1b1b1b;border-radius:1.5px"></div>
<span class="t m" style="left:431.9px;top:506.14px;font-size:7.5px;line-height:7.5px;color:#cfcfcf;">无</span>
<svg class="a" style="left:478.2px;top:508.57px;" width="6" height="3.6" viewBox="0 0 6 3.6"><path d="M0.5 0.5l2.5 2.6l2.5 -2.6" fill="none" stroke="#8a8a8a" stroke-width="1.0"/></svg>
<div class="a" style="left:15.6px;top:529.3px;width:484px;height:0.9px;background:#242424;"></div>
<div class="a" style="left:4.6px;top:518.5px;width:7.4px;height:9.2px;background:#1f1f1f;"></div>
<div class="a" style="left:24.6px;top:518.5px;width:6.8px;height:9.2px;background:#212121;"></div>
<div class="a" style="left:34px;top:518.5px;width:6.8px;height:9.2px;background:#212121;"></div>
<svg class="a" style="left:50px;top:520.8px;" width="3.4" height="5.2" viewBox="0 0 3.4 5.2"><path d="M0.5 0.5l2.4 2.1l-2.4 2.1" fill="none" stroke="#808080" stroke-width="1.0"/></svg>
<div class="a" style="left:57.8px;top:517.9px;width:10.1px;height:10.2px;background:#6d74e4;"></div>
<span class="t" style="left:72.4px;top:519.2px;font-size:8px;color:#b6b6b6;line-height:9px;font-weight:bold;">4</span>
<svg class="a" style="left:93.6px;top:518.9px;" width="8" height="8" viewBox="0 0 8 8"><path d="M3.7 0.2l1.05 2.3l2.5 0.3l-1.85 1.7l0.5 2.5l-2.2-1.25l-2.2 1.25l0.5-2.5l-1.85-1.7l2.5-0.3z" fill="#ececec"/></svg>
<svg class="a" style="left:104.8px;top:518.5px;" width="9.2" height="9.2" viewBox="0 0 9.2 9.2"><rect x="0.5" y="0.5" width="8.2" height="8.2" fill="#111" stroke="#d8d8d8" stroke-width="1"/><circle cx="4.6" cy="4.6" r="1.9" fill="#f2f2f2"/></svg>
<span class="t b" style="left:117.5px;top:520.07px;font-size:7.7px;line-height:7.7px;color:#d4d4d4;letter-spacing:0.2px;">内容</span>
<span class="t" style="left:136.7px;top:519.79px;font-size:7.7px;color:#d4d4d4;line-height:9px;font-weight:bold;">2</span>
<svg class="a" style="left:212.8px;top:518.7px;" width="9" height="9" viewBox="0 0 9 9"><path d="M4.4 0.2v2M1.2 2.2h6.4M2.4 2.2v3h4v-3M0.4 6.4h8M4.4 5.2v3.6M2.6 8.8l-1.8-1.2M6.2 8.8l1.8-1.2" fill="none" stroke="#c8c8c8" stroke-width="0.95"/></svg>
<svg class="a" style="left:224px;top:519.5px;" width="7.4" height="7.4" viewBox="0 0 7.4 7.4"><circle cx="3.7" cy="3.7" r="1.5" fill="none" stroke="#5c5c5c" stroke-width="0.9"/><path d="M3.7 0.2v1.4M3.7 5.8v1.4M0.2 3.7h1.4M5.8 3.7h1.4M1.2 1.2l1 1M5.2 5.2l1 1M6.2 1.2l-1 1M1.2 6.2l1-1" stroke="#5c5c5c" stroke-width="0.8"/></svg>
<svg class="a" style="left:233.4px;top:519.3px;" width="8" height="8" viewBox="0 0 8 8"><path d="M0.8 7l6.2-6.2" stroke="#d0d0d0" stroke-width="1.1"/></svg>
<div class="a" style="left:263.5px;top:518.5px;width:9.4px;height:9.2px;background:#242424;"></div>
<div class="a" style="left:274px;top:518.5px;width:9.4px;height:9.2px;background:#242424;"></div>
<div class="a" style="left:284.5px;top:518.5px;width:9.4px;height:9.2px;background:#242424;"></div>
<div class="a" style="left:303.9px;top:517.4px;width:45.9px;height:11.4px;background:#1b1b1b;border-radius:1.5px"></div>
<span class="t m" style="left:308.4px;top:519.47px;font-size:7.5px;line-height:7.5px;color:#dcdcdc;">正常</span>
<svg class="a" style="left:341px;top:521.9px;" width="6" height="3.6" viewBox="0 0 6 3.6"><path d="M0.5 0.5l2.5 2.6l2.5 -2.6" fill="none" stroke="#8a8a8a" stroke-width="1.0"/></svg>
<div class="a" style="left:352.6px;top:518.5px;width:8.4px;height:9.2px;background:#242424;"></div>
<div class="a" style="left:367.2px;top:517.4px;width:40.8px;height:11.4px;background:#1b1b1b;border-radius:1.5px"></div>
<span class="t m" style="left:369.7px;top:519.47px;font-size:7.5px;line-height:7.5px;color:#cfcfcf;">无</span>
<svg class="a" style="left:400.8px;top:521.9px;" width="6" height="3.6" viewBox="0 0 6 3.6"><path d="M0.5 0.5l2.5 2.6l2.5 -2.6" fill="none" stroke="#8a8a8a" stroke-width="1.0"/></svg>
<svg class="a" style="left:415.4px;top:518.7px;" width="9" height="9" viewBox="0 0 9 9"><path d="M4.6 4.8a0.9 0.9 0 1 1 1.2-0.9a2.1 2.1 0 1 1-2.6-1.6a3.4 3.4 0 1 1 -0.6 6.2" fill="none" stroke="#a8a8a8" stroke-width="0.9"/></svg>
<div class="a" style="left:429px;top:517.4px;width:57.7px;height:11.4px;background:#1b1b1b;border-radius:1.5px"></div>
<span class="t m" style="left:431.9px;top:519.47px;font-size:7.5px;line-height:7.5px;color:#cfcfcf;">无</span>
<svg class="a" style="left:478.2px;top:521.9px;" width="6" height="3.6" viewBox="0 0 6 3.6"><path d="M0.5 0.5l2.5 2.6l2.5 -2.6" fill="none" stroke="#8a8a8a" stroke-width="1.0"/></svg>
<div class="a" style="left:15.6px;top:542.63px;width:484px;height:0.9px;background:#242424;"></div>
<svg class="a" style="left:4.4px;top:531.83px;" width="9" height="9" viewBox="0 0 9 9"><path d="M0.4 4.6c2-3.6 5.8-3.6 7.8 0c-2 3.6-5.8 3.6-7.8 0z" fill="#d2d2d2"/><circle cx="4.3" cy="4.6" r="1.6" fill="#1c1c1c"/><circle cx="4.3" cy="4.6" r="0.7" fill="#d2d2d2"/></svg>
<div class="a" style="left:24.6px;top:531.83px;width:6.8px;height:9.2px;background:#212121;"></div>
<div class="a" style="left:34px;top:531.83px;width:6.8px;height:9.2px;background:#212121;"></div>
<svg class="a" style="left:50px;top:534.13px;" width="3.4" height="5.2" viewBox="0 0 3.4 5.2"><path d="M0.5 0.5l2.4 2.1l-2.4 2.1" fill="none" stroke="#808080" stroke-width="1.0"/></svg>
<div class="a" style="left:57.8px;top:531.23px;width:10.1px;height:10.2px;background:#6d74e4;"></div>
<span class="t" style="left:72.4px;top:532.53px;font-size:8px;color:#b6b6b6;line-height:9px;font-weight:bold;">5</span>
<svg class="a" style="left:93.6px;top:532.23px;" width="8" height="8" viewBox="0 0 8 8"><path d="M3.7 0.2l1.05 2.3l2.5 0.3l-1.85 1.7l0.5 2.5l-2.2-1.25l-2.2 1.25l0.5-2.5l-1.85-1.7l2.5-0.3z" fill="#ececec"/></svg>
<svg class="a" style="left:104.8px;top:531.83px;" width="9.2" height="9.2" viewBox="0 0 9.2 9.2"><rect x="0.5" y="0.5" width="8.2" height="8.2" fill="#3a3a3a" stroke="#c8c8c8" stroke-width="1"/><path d="M2 2h2.2v2.2h-2.2zM5 5h2.2v2.2h-2.2z" fill="#6e6e6e"/></svg>
<span class="t b" style="left:117.5px;top:533.4px;font-size:7.7px;line-height:7.7px;color:#d4d4d4;letter-spacing:0.2px;">波浪</span>
<span class="t" style="left:136.7px;top:533.12px;font-size:7.7px;color:#d4d4d4;line-height:9px;font-weight:bold;">2</span>
<svg class="a" style="left:212.8px;top:532.03px;" width="9" height="9" viewBox="0 0 9 9"><path d="M4.4 0.2v2M1.2 2.2h6.4M2.4 2.2v3h4v-3M0.4 6.4h8M4.4 5.2v3.6M2.6 8.8l-1.8-1.2M6.2 8.8l1.8-1.2" fill="none" stroke="#c8c8c8" stroke-width="0.95"/></svg>
<svg class="a" style="left:224px;top:532.83px;" width="7.4" height="7.4" viewBox="0 0 7.4 7.4"><circle cx="3.7" cy="3.7" r="1.5" fill="none" stroke="#5c5c5c" stroke-width="0.9"/><path d="M3.7 0.2v1.4M3.7 5.8v1.4M0.2 3.7h1.4M5.8 3.7h1.4M1.2 1.2l1 1M5.2 5.2l1 1M6.2 1.2l-1 1M1.2 6.2l1-1" stroke="#5c5c5c" stroke-width="0.8"/></svg>
<svg class="a" style="left:233.4px;top:532.63px;" width="8" height="8" viewBox="0 0 8 8"><path d="M0.8 7l6.2-6.2" stroke="#d0d0d0" stroke-width="1.1"/></svg>
<svg class="a" style="left:243.6px;top:532.03px;" width="8" height="9" viewBox="0 0 8 9"><path d="M4.2 0.8c-1.4-0.2-1.9 0.6-2.1 1.7l-1 5.2c-0.1 0.6-0.4 0.8-1 0.7M1 3.4h2.6" fill="none" stroke="#c8c8c8" stroke-width="0.95"/><path d="M3.8 3.8l3 3.8M7 3.7l-3.5 4" stroke="#c8c8c8" stroke-width="0.9"/></svg>
<div class="a" style="left:263.5px;top:531.83px;width:9.4px;height:9.2px;background:#242424;"></div>
<div class="a" style="left:274px;top:531.83px;width:9.4px;height:9.2px;background:#242424;"></div>
<div class="a" style="left:284.5px;top:531.83px;width:9.4px;height:9.2px;background:#242424;"></div>
<div class="a" style="left:303.9px;top:530.73px;width:45.9px;height:11.4px;background:#1b1b1b;border-radius:1.5px"></div>
<span class="t m" style="left:308.4px;top:532.81px;font-size:7.5px;line-height:7.5px;color:#dcdcdc;">正常</span>
<svg class="a" style="left:341px;top:535.23px;" width="6" height="3.6" viewBox="0 0 6 3.6"><path d="M0.5 0.5l2.5 2.6l2.5 -2.6" fill="none" stroke="#8a8a8a" stroke-width="1.0"/></svg>
<div class="a" style="left:352.6px;top:531.83px;width:8.4px;height:9.2px;background:#242424;"></div>
<div class="a" style="left:367.2px;top:530.73px;width:40.8px;height:11.4px;background:#1b1b1b;border-radius:1.5px"></div>
<span class="t" style="left:369.7px;top:533.17px;font-size:7px;color:#cfcfcf;line-height:7px;">Alpha</span>
<svg class="a" style="left:400.8px;top:535.23px;" width="6" height="3.6" viewBox="0 0 6 3.6"><path d="M0.5 0.5l2.5 2.6l2.5 -2.6" fill="none" stroke="#8a8a8a" stroke-width="1.0"/></svg>
<svg class="a" style="left:415.4px;top:532.03px;" width="9" height="9" viewBox="0 0 9 9"><path d="M4.6 4.8a0.9 0.9 0 1 1 1.2-0.9a2.1 2.1 0 1 1-2.6-1.6a3.4 3.4 0 1 1 -0.6 6.2" fill="none" stroke="#a8a8a8" stroke-width="0.9"/></svg>
<div class="a" style="left:429px;top:530.73px;width:57.7px;height:11.4px;background:#1b1b1b;border-radius:1.5px"></div>
<span class="t m" style="left:431.9px;top:532.81px;font-size:7.5px;line-height:7.5px;color:#cfcfcf;">无</span>
<svg class="a" style="left:478.2px;top:535.23px;" width="6" height="3.6" viewBox="0 0 6 3.6"><path d="M0.5 0.5l2.5 2.6l2.5 -2.6" fill="none" stroke="#8a8a8a" stroke-width="1.0"/></svg>
<div class="a" style="left:15.6px;top:555.97px;width:484px;height:0.9px;background:#242424;"></div>
<div class="a" style="left:4.6px;top:545.16px;width:7.4px;height:9.2px;background:#1f1f1f;"></div>
<div class="a" style="left:24.6px;top:545.16px;width:6.8px;height:9.2px;background:#212121;"></div>
<div class="a" style="left:34px;top:545.16px;width:6.8px;height:9.2px;background:#212121;"></div>
<svg class="a" style="left:50px;top:547.47px;" width="3.4" height="5.2" viewBox="0 0 3.4 5.2"><path d="M0.5 0.5l2.4 2.1l-2.4 2.1" fill="none" stroke="#808080" stroke-width="1.0"/></svg>
<div class="a" style="left:57.8px;top:544.56px;width:10.1px;height:10.2px;background:#6d74e4;"></div>
<span class="t" style="left:72.4px;top:545.86px;font-size:8px;color:#b6b6b6;line-height:9px;font-weight:bold;">6</span>
<svg class="a" style="left:93.6px;top:545.56px;" width="8" height="8" viewBox="0 0 8 8"><path d="M3.7 0.2l1.05 2.3l2.5 0.3l-1.85 1.7l0.5 2.5l-2.2-1.25l-2.2 1.25l0.5-2.5l-1.85-1.7l2.5-0.3z" fill="#ececec"/></svg>
<svg class="a" style="left:104.8px;top:545.16px;" width="9.2" height="9.2" viewBox="0 0 9.2 9.2"><rect x="0.5" y="0.5" width="8.2" height="8.2" fill="#111" stroke="#d8d8d8" stroke-width="1"/><circle cx="4.6" cy="4.6" r="1.9" fill="#f2f2f2"/></svg>
<span class="t b" style="left:117.5px;top:546.74px;font-size:7.7px;line-height:7.7px;color:#d4d4d4;letter-spacing:0.2px;">内容</span>
<svg class="a" style="left:212.8px;top:545.37px;" width="9" height="9" viewBox="0 0 9 9"><path d="M4.4 0.2v2M1.2 2.2h6.4M2.4 2.2v3h4v-3M0.4 6.4h8M4.4 5.2v3.6M2.6 8.8l-1.8-1.2M6.2 8.8l1.8-1.2" fill="none" stroke="#c8c8c8" stroke-width="0.95"/></svg>
<svg class="a" style="left:224px;top:546.16px;" width="7.4" height="7.4" viewBox="0 0 7.4 7.4"><circle cx="3.7" cy="3.7" r="1.5" fill="none" stroke="#5c5c5c" stroke-width="0.9"/><path d="M3.7 0.2v1.4M3.7 5.8v1.4M0.2 3.7h1.4M5.8 3.7h1.4M1.2 1.2l1 1M5.2 5.2l1 1M6.2 1.2l-1 1M1.2 6.2l1-1" stroke="#5c5c5c" stroke-width="0.8"/></svg>
<svg class="a" style="left:233.4px;top:545.97px;" width="8" height="8" viewBox="0 0 8 8"><path d="M0.8 7l6.2-6.2" stroke="#d0d0d0" stroke-width="1.1"/></svg>
<div class="a" style="left:263.5px;top:545.16px;width:9.4px;height:9.2px;background:#242424;"></div>
<div class="a" style="left:274px;top:545.16px;width:9.4px;height:9.2px;background:#242424;"></div>
<div class="a" style="left:284.5px;top:545.16px;width:9.4px;height:9.2px;background:#242424;"></div>
<div class="a" style="left:303.9px;top:544.06px;width:45.9px;height:11.4px;background:#1b1b1b;border-radius:1.5px"></div>
<span class="t m" style="left:308.4px;top:546.14px;font-size:7.5px;line-height:7.5px;color:#dcdcdc;">正常</span>
<svg class="a" style="left:341px;top:548.56px;" width="6" height="3.6" viewBox="0 0 6 3.6"><path d="M0.5 0.5l2.5 2.6l2.5 -2.6" fill="none" stroke="#8a8a8a" stroke-width="1.0"/></svg>
<div class="a" style="left:352.6px;top:545.16px;width:8.4px;height:9.2px;background:#242424;"></div>
<div class="a" style="left:367.2px;top:544.06px;width:40.8px;height:11.4px;background:#1b1b1b;border-radius:1.5px"></div>
<span class="t m" style="left:369.7px;top:546.14px;font-size:7.5px;line-height:7.5px;color:#cfcfcf;">无</span>
<svg class="a" style="left:400.8px;top:548.56px;" width="6" height="3.6" viewBox="0 0 6 3.6"><path d="M0.5 0.5l2.5 2.6l2.5 -2.6" fill="none" stroke="#8a8a8a" stroke-width="1.0"/></svg>
<svg class="a" style="left:415.4px;top:545.37px;" width="9" height="9" viewBox="0 0 9 9"><path d="M4.6 4.8a0.9 0.9 0 1 1 1.2-0.9a2.1 2.1 0 1 1-2.6-1.6a3.4 3.4 0 1 1 -0.6 6.2" fill="none" stroke="#a8a8a8" stroke-width="0.9"/></svg>
<div class="a" style="left:429px;top:544.06px;width:57.7px;height:11.4px;background:#1b1b1b;border-radius:1.5px"></div>
<span class="t m" style="left:431.9px;top:546.14px;font-size:7.5px;line-height:7.5px;color:#cfcfcf;">无</span>
<svg class="a" style="left:478.2px;top:548.56px;" width="6" height="3.6" viewBox="0 0 6 3.6"><path d="M0.5 0.5l2.5 2.6l2.5 -2.6" fill="none" stroke="#8a8a8a" stroke-width="1.0"/></svg>
<div class="a" style="left:15.6px;top:569.3px;width:484px;height:0.9px;background:#242424;"></div>
<svg class="a" style="left:4.4px;top:558.5px;" width="9" height="9" viewBox="0 0 9 9"><path d="M0.4 4.6c2-3.6 5.8-3.6 7.8 0c-2 3.6-5.8 3.6-7.8 0z" fill="#d2d2d2"/><circle cx="4.3" cy="4.6" r="1.6" fill="#1c1c1c"/><circle cx="4.3" cy="4.6" r="0.7" fill="#d2d2d2"/></svg>
<div class="a" style="left:24.6px;top:558.5px;width:6.8px;height:9.2px;background:#212121;"></div>
<div class="a" style="left:34px;top:558.5px;width:6.8px;height:9.2px;background:#212121;"></div>
<svg class="a" style="left:50px;top:560.8px;" width="3.4" height="5.2" viewBox="0 0 3.4 5.2"><path d="M0.5 0.5l2.4 2.1l-2.4 2.1" fill="none" stroke="#808080" stroke-width="1.0"/></svg>
<div class="a" style="left:57.8px;top:557.9px;width:10.1px;height:10.2px;background:#6d74e4;"></div>
<span class="t" style="left:72.4px;top:559.19px;font-size:8px;color:#b6b6b6;line-height:9px;font-weight:bold;">7</span>
<svg class="a" style="left:93.6px;top:558.9px;" width="8" height="8" viewBox="0 0 8 8"><path d="M3.7 0.2l1.05 2.3l2.5 0.3l-1.85 1.7l0.5 2.5l-2.2-1.25l-2.2 1.25l0.5-2.5l-1.85-1.7l2.5-0.3z" fill="#ececec"/></svg>
<svg class="a" style="left:104.8px;top:558.5px;" width="9.2" height="9.2" viewBox="0 0 9.2 9.2"><rect x="0.5" y="0.5" width="8.2" height="8.2" fill="#3a3a3a" stroke="#c8c8c8" stroke-width="1"/><path d="M2 2h2.2v2.2h-2.2zM5 5h2.2v2.2h-2.2z" fill="#6e6e6e"/></svg>
<span class="t b" style="left:117.5px;top:560.07px;font-size:7.7px;line-height:7.7px;color:#d4d4d4;letter-spacing:0.2px;">波浪</span>
<svg class="a" style="left:212.8px;top:558.7px;" width="9" height="9" viewBox="0 0 9 9"><path d="M4.4 0.2v2M1.2 2.2h6.4M2.4 2.2v3h4v-3M0.4 6.4h8M4.4 5.2v3.6M2.6 8.8l-1.8-1.2M6.2 8.8l1.8-1.2" fill="none" stroke="#c8c8c8" stroke-width="0.95"/></svg>
<svg class="a" style="left:224px;top:559.5px;" width="7.4" height="7.4" viewBox="0 0 7.4 7.4"><circle cx="3.7" cy="3.7" r="1.5" fill="none" stroke="#5c5c5c" stroke-width="0.9"/><path d="M3.7 0.2v1.4M3.7 5.8v1.4M0.2 3.7h1.4M5.8 3.7h1.4M1.2 1.2l1 1M5.2 5.2l1 1M6.2 1.2l-1 1M1.2 6.2l1-1" stroke="#5c5c5c" stroke-width="0.8"/></svg>
<svg class="a" style="left:233.4px;top:559.3px;" width="8" height="8" viewBox="0 0 8 8"><path d="M0.8 7l6.2-6.2" stroke="#d0d0d0" stroke-width="1.1"/></svg>
<svg class="a" style="left:243.6px;top:558.7px;" width="8" height="9" viewBox="0 0 8 9"><path d="M4.2 0.8c-1.4-0.2-1.9 0.6-2.1 1.7l-1 5.2c-0.1 0.6-0.4 0.8-1 0.7M1 3.4h2.6" fill="none" stroke="#c8c8c8" stroke-width="0.95"/><path d="M3.8 3.8l3 3.8M7 3.7l-3.5 4" stroke="#c8c8c8" stroke-width="0.9"/></svg>
<div class="a" style="left:263.5px;top:558.5px;width:9.4px;height:9.2px;background:#242424;"></div>
<div class="a" style="left:274px;top:558.5px;width:9.4px;height:9.2px;background:#242424;"></div>
<div class="a" style="left:284.5px;top:558.5px;width:9.4px;height:9.2px;background:#242424;"></div>
<div class="a" style="left:303.9px;top:557.4px;width:45.9px;height:11.4px;background:#1b1b1b;border-radius:1.5px"></div>
<span class="t m" style="left:308.4px;top:559.47px;font-size:7.5px;line-height:7.5px;color:#dcdcdc;">正常</span>
<svg class="a" style="left:341px;top:561.9px;" width="6" height="3.6" viewBox="0 0 6 3.6"><path d="M0.5 0.5l2.5 2.6l2.5 -2.6" fill="none" stroke="#8a8a8a" stroke-width="1.0"/></svg>
<div class="a" style="left:352.6px;top:558.5px;width:8.4px;height:9.2px;background:#242424;"></div>
<div class="a" style="left:367.2px;top:557.4px;width:40.8px;height:11.4px;background:#1b1b1b;border-radius:1.5px"></div>
<span class="t" style="left:369.7px;top:559.83px;font-size:7px;color:#cfcfcf;line-height:7px;">Alpha</span>
<svg class="a" style="left:400.8px;top:561.9px;" width="6" height="3.6" viewBox="0 0 6 3.6"><path d="M0.5 0.5l2.5 2.6l2.5 -2.6" fill="none" stroke="#8a8a8a" stroke-width="1.0"/></svg>
<svg class="a" style="left:415.4px;top:558.7px;" width="9" height="9" viewBox="0 0 9 9"><path d="M4.6 4.8a0.9 0.9 0 1 1 1.2-0.9a2.1 2.1 0 1 1-2.6-1.6a3.4 3.4 0 1 1 -0.6 6.2" fill="none" stroke="#a8a8a8" stroke-width="0.9"/></svg>
<div class="a" style="left:429px;top:557.4px;width:57.7px;height:11.4px;background:#1b1b1b;border-radius:1.5px"></div>
<span class="t m" style="left:431.9px;top:559.47px;font-size:7.5px;line-height:7.5px;color:#cfcfcf;">无</span>
<svg class="a" style="left:478.2px;top:561.9px;" width="6" height="3.6" viewBox="0 0 6 3.6"><path d="M0.5 0.5l2.5 2.6l2.5 -2.6" fill="none" stroke="#8a8a8a" stroke-width="1.0"/></svg>
<div class="a" style="left:15.6px;top:582.63px;width:484px;height:0.9px;background:#242424;"></div>
<svg class="a" style="left:4.4px;top:571.83px;" width="9" height="9" viewBox="0 0 9 9"><path d="M0.4 4.6c2-3.6 5.8-3.6 7.8 0c-2 3.6-5.8 3.6-7.8 0z" fill="#d2d2d2"/><circle cx="4.3" cy="4.6" r="1.6" fill="#1c1c1c"/><circle cx="4.3" cy="4.6" r="0.7" fill="#d2d2d2"/></svg>
<div class="a" style="left:24.6px;top:571.83px;width:6.8px;height:9.2px;background:#212121;"></div>
<div class="a" style="left:34px;top:571.83px;width:6.8px;height:9.2px;background:#212121;"></div>
<svg class="a" style="left:50px;top:574.13px;" width="3.4" height="5.2" viewBox="0 0 3.4 5.2"><path d="M0.5 0.5l2.4 2.1l-2.4 2.1" fill="none" stroke="#808080" stroke-width="1.0"/></svg>
<div class="a" style="left:57.8px;top:571.23px;width:10.1px;height:10.2px;background:#6d74e4;"></div>
<span class="t" style="left:72.4px;top:572.53px;font-size:8px;color:#b6b6b6;line-height:9px;font-weight:bold;">8</span>
<svg class="a" style="left:93.6px;top:572.23px;" width="8" height="8" viewBox="0 0 8 8"><path d="M3.7 0.2l1.05 2.3l2.5 0.3l-1.85 1.7l0.5 2.5l-2.2-1.25l-2.2 1.25l0.5-2.5l-1.85-1.7l2.5-0.3z" fill="#ececec"/></svg>
<span class="t b" style="left:106.5px;top:573.4px;font-size:7.7px;line-height:7.7px;color:#d4d4d4;letter-spacing:0.2px;">外框</span>
<svg class="a" style="left:212.8px;top:572.03px;" width="9" height="9" viewBox="0 0 9 9"><path d="M4.4 0.2v2M1.2 2.2h6.4M2.4 2.2v3h4v-3M0.4 6.4h8M4.4 5.2v3.6M2.6 8.8l-1.8-1.2M6.2 8.8l1.8-1.2" fill="none" stroke="#c8c8c8" stroke-width="0.95"/></svg>
<svg class="a" style="left:224px;top:572.83px;" width="7.4" height="7.4" viewBox="0 0 7.4 7.4"><circle cx="3.7" cy="3.7" r="1.5" fill="none" stroke="#5c5c5c" stroke-width="0.9"/><path d="M3.7 0.2v1.4M3.7 5.8v1.4M0.2 3.7h1.4M5.8 3.7h1.4M1.2 1.2l1 1M5.2 5.2l1 1M6.2 1.2l-1 1M1.2 6.2l1-1" stroke="#5c5c5c" stroke-width="0.8"/></svg>
<svg class="a" style="left:233.4px;top:572.63px;" width="8" height="8" viewBox="0 0 8 8"><path d="M0.8 7l6.2-6.2" stroke="#d0d0d0" stroke-width="1.1"/></svg>
<div class="a" style="left:263.5px;top:571.83px;width:9.4px;height:9.2px;background:#242424;"></div>
<div class="a" style="left:274px;top:571.83px;width:9.4px;height:9.2px;background:#242424;"></div>
<div class="a" style="left:284.5px;top:571.83px;width:9.4px;height:9.2px;background:#242424;"></div>
<div class="a" style="left:303.9px;top:570.73px;width:45.9px;height:11.4px;background:#1b1b1b;border-radius:1.5px"></div>
<span class="t m" style="left:308.4px;top:572.81px;font-size:7.5px;line-height:7.5px;color:#dcdcdc;">正常</span>
<svg class="a" style="left:341px;top:575.23px;" width="6" height="3.6" viewBox="0 0 6 3.6"><path d="M0.5 0.5l2.5 2.6l2.5 -2.6" fill="none" stroke="#8a8a8a" stroke-width="1.0"/></svg>
<div class="a" style="left:352.6px;top:571.83px;width:8.4px;height:9.2px;background:#242424;"></div>
<div class="a" style="left:367.2px;top:570.73px;width:40.8px;height:11.4px;background:#1b1b1b;border-radius:1.5px"></div>
<span class="t m" style="left:369.7px;top:572.81px;font-size:7.5px;line-height:7.5px;color:#cfcfcf;">无</span>
<svg class="a" style="left:400.8px;top:575.23px;" width="6" height="3.6" viewBox="0 0 6 3.6"><path d="M0.5 0.5l2.5 2.6l2.5 -2.6" fill="none" stroke="#8a8a8a" stroke-width="1.0"/></svg>
<svg class="a" style="left:415.4px;top:572.03px;" width="9" height="9" viewBox="0 0 9 9"><path d="M4.6 4.8a0.9 0.9 0 1 1 1.2-0.9a2.1 2.1 0 1 1-2.6-1.6a3.4 3.4 0 1 1 -0.6 6.2" fill="none" stroke="#a8a8a8" stroke-width="0.9"/></svg>
<div class="a" style="left:429px;top:570.73px;width:57.7px;height:11.4px;background:#1b1b1b;border-radius:1.5px"></div>
<span class="t m" style="left:431.9px;top:572.81px;font-size:7.5px;line-height:7.5px;color:#cfcfcf;">无</span>
<svg class="a" style="left:478.2px;top:575.23px;" width="6" height="3.6" viewBox="0 0 6 3.6"><path d="M0.5 0.5l2.5 2.6l2.5 -2.6" fill="none" stroke="#8a8a8a" stroke-width="1.0"/></svg>
<div class="a" style="left:499.6px;top:440px;width:6.4px;height:234px;background:#1a1a1a;"></div>
<div class="a" style="left:506.2px;top:476.4px;width:757.8px;height:197px;background:#323232;"></div>
<div class="a" style="left:1264px;top:463.4px;width:16px;height:210px;background:#282828;"></div>
<div class="a" style="left:506.2px;top:444px;width:757.8px;height:5px;background:#6c6c6c;"></div>
<div class="a" style="left:501.6px;top:444px;width:4.4px;height:5px;background:#2d8ceb;border-radius:2.5px 0 0 2.5px"></div>
<div class="a" style="left:1264px;top:444px;width:3.6px;height:5px;background:#2d8ceb;border-radius:0 2.5px 2.5px 0"></div>
<div class="a" style="left:506.2px;top:449.2px;width:757.8px;height:14.2px;background:#1e1e1e;"></div>
<span class="t" style="left:510.2px;top:451.43px;font-size:7px;color:#9c9c9c;line-height:7px;letter-spacing:0.55px;">0f</span>
<span class="t" style="left:532.22px;top:451.43px;font-size:7px;color:#9c9c9c;line-height:7px;letter-spacing:0.55px;">00:15f</span>
<span class="t" style="left:570.12px;top:451.43px;font-size:7px;color:#9c9c9c;line-height:7px;letter-spacing:0.55px;">01:00f</span>
<span class="t" style="left:608.02px;top:451.43px;font-size:7px;color:#9c9c9c;line-height:7px;letter-spacing:0.55px;">01:15f</span>
<span class="t" style="left:645.92px;top:451.43px;font-size:7px;color:#9c9c9c;line-height:7px;letter-spacing:0.55px;">02:00f</span>
<span class="t" style="left:683.82px;top:451.43px;font-size:7px;color:#9c9c9c;line-height:7px;letter-spacing:0.55px;">02:15f</span>
<span class="t" style="left:721.72px;top:451.43px;font-size:7px;color:#9c9c9c;line-height:7px;letter-spacing:0.55px;">03:00f</span>
<span class="t" style="left:759.62px;top:451.43px;font-size:7px;color:#9c9c9c;line-height:7px;letter-spacing:0.55px;">03:15f</span>
<span class="t" style="left:797.52px;top:451.43px;font-size:7px;color:#9c9c9c;line-height:7px;letter-spacing:0.55px;">04:00f</span>
<span class="t" style="left:835.42px;top:451.43px;font-size:7px;color:#9c9c9c;line-height:7px;letter-spacing:0.55px;">04:15f</span>
<span class="t" style="left:873.32px;top:451.43px;font-size:7px;color:#9c9c9c;line-height:7px;letter-spacing:0.55px;">05:00f</span>
<span class="t" style="left:911.22px;top:451.43px;font-size:7px;color:#9c9c9c;line-height:7px;letter-spacing:0.55px;">05:15f</span>
<span class="t" style="left:949.12px;top:451.43px;font-size:7px;color:#9c9c9c;line-height:7px;letter-spacing:0.55px;">06:00f</span>
<span class="t" style="left:987.02px;top:451.43px;font-size:7px;color:#9c9c9c;line-height:7px;letter-spacing:0.55px;">06:15f</span>
<span class="t" style="left:1024.92px;top:451.43px;font-size:7px;color:#9c9c9c;line-height:7px;letter-spacing:0.55px;">07:00f</span>
<span class="t" style="left:1062.82px;top:451.43px;font-size:7px;color:#9c9c9c;line-height:7px;letter-spacing:0.55px;">07:15f</span>
<span class="t" style="left:1100.72px;top:451.43px;font-size:7px;color:#9c9c9c;line-height:7px;letter-spacing:0.55px;">08:00f</span>
<span class="t" style="left:1138.62px;top:451.43px;font-size:7px;color:#9c9c9c;line-height:7px;letter-spacing:0.55px;">08:15f</span>
<span class="t" style="left:1176.52px;top:451.43px;font-size:7px;color:#9c9c9c;line-height:7px;letter-spacing:0.55px;">09:00f</span>
<span class="t" style="left:1214.42px;top:451.43px;font-size:7px;color:#9c9c9c;line-height:7px;letter-spacing:0.55px;">09:15f</span>
<span class="t" style="left:1250.6px;top:451.43px;font-size:7px;color:#9c9c9c;line-height:7px;letter-spacing:0.55px;">10:0</span>
<div class="a" style="left:1264px;top:449.2px;width:16px;height:14.2px;background:#232323;"></div>
<svg class="a" style="left:506.2px;top:449.2px;" width="757.8" height="14" viewBox="0 0 757.8 14"><path d="M38.2 10.6v2.6M76.1 10.6v2.6M114 10.6v2.6M151.9 10.6v2.6M189.8 10.6v2.6M227.7 10.6v2.6M265.6 10.6v2.6M303.5 10.6v2.6M341.4 10.6v2.6M379.3 10.6v2.6M417.2 10.6v2.6M455.1 10.6v2.6M493 10.6v2.6M530.9 10.6v2.6M568.8 10.6v2.6M606.7 10.6v2.6M644.6 10.6v2.6M682.5 10.6v2.6M720.4 10.6v2.6" stroke="#8a8a8a" stroke-width="0.9"/></svg>
<div class="a" style="left:506.2px;top:463.6px;width:757.8px;height:9.6px;background:#636363;"></div>
<div class="a" style="left:501.8px;top:464.8px;width:3.8px;height:8.4px;background:#2d8ceb;border-radius:1.5px"></div>
<div class="a" style="left:1264.2px;top:464.8px;width:3.4px;height:8.4px;background:#2d8ceb;border-radius:1.5px"></div>
<div class="a" style="left:506.2px;top:473px;width:757.8px;height:4.2px;background:#0c4510;"></div>
<div class="a" style="left:506.2px;top:474.2px;width:757.8px;height:1.9px;background:#3aba48;"></div>
<div class="a" style="left:798.4px;top:473.4px;width:3.6px;height:3.2px;background:#0c2a44;"></div>
<div class="a" style="left:941.4px;top:473.4px;width:3.6px;height:3.2px;background:#0c2a44;"></div>
<div class="a" style="left:1081.9px;top:473.4px;width:3.6px;height:3.2px;background:#0c2a44;"></div>
<div class="a" style="left:506.2px;top:477.2px;width:757.8px;height:13.4px;background:#262f48;"></div>
<div class="a" style="left:506.2px;top:477.6px;width:757.8px;height:11.4px;background:#575f94;"></div>
<div class="a" style="left:506.2px;top:490.53px;width:757.8px;height:13.4px;background:#262f48;"></div>
<div class="a" style="left:506.2px;top:490.93px;width:757.8px;height:11.4px;background:#575f94;"></div>
<div class="a" style="left:506.2px;top:503.87px;width:757.8px;height:13.4px;background:#262f48;"></div>
<div class="a" style="left:506.2px;top:504.27px;width:757.8px;height:11.4px;background:#575f94;"></div>
<div class="a" style="left:506.2px;top:517.2px;width:757.8px;height:13.4px;background:#262f48;"></div>
<div class="a" style="left:506.2px;top:517.6px;width:757.8px;height:11.4px;background:#575f94;"></div>
<div class="a" style="left:506.2px;top:530.53px;width:757.8px;height:13.4px;background:#262f48;"></div>
<div class="a" style="left:506.2px;top:530.93px;width:757.8px;height:11.4px;background:#575f94;"></div>
<div class="a" style="left:506.2px;top:543.87px;width:757.8px;height:13.4px;background:#262f48;"></div>
<div class="a" style="left:506.2px;top:544.26px;width:757.8px;height:11.4px;background:#575f94;"></div>
<div class="a" style="left:506.2px;top:557.2px;width:757.8px;height:13.4px;background:#262f48;"></div>
<div class="a" style="left:1157.5px;top:557.6px;width:106.5px;height:11.4px;background:#3f4040;"></div>
<div class="a" style="left:506.2px;top:557.6px;width:651.3px;height:11.4px;background:#575f94;"></div>
<div class="a" style="left:506.2px;top:570.53px;width:757.8px;height:13.4px;background:#262f48;"></div>
<div class="a" style="left:506.2px;top:570.93px;width:757.8px;height:11.4px;background:#5b5fa0;"></div>
<div class="a" style="left:499.8px;top:558.13px;width:6.4px;height:11.4px;background:#575f94;"></div>
<div class="a" style="left:505.5px;top:461px;width:1.2px;height:123px;background:#5488cf;"></div>
<div class="a" style="left:505.5px;top:584px;width:1.4px;height:89.4px;background:#4a5b7c;"></div>
<svg class="a" style="left:501.4px;top:452.6px;" width="9.4" height="10.4" viewBox="0 0 9.4 10.4"><path d="M0.6 2.2a1.6 1.6 0 0 1 1.6-1.6h5a1.6 1.6 0 0 1 1.6 1.6v3.2l-4.1 4.4l-4.1-4.4z" fill="#2d8ceb"/><path d="M3.6 3h2.2" stroke="#8fc0f4" stroke-width="0.8"/></svg>
<svg class="a" style="left:1270.6px;top:464.4px;" width="9" height="10" viewBox="0 0 9 10"><path d="M0.6 0.6h7.6v5.8l-3.8 3l-3.8-3z" fill="#bebebe"/></svg>
<svg class="a" style="left:1270.6px;top:478.6px;" width="9.4" height="9.4" viewBox="0 0 9.4 9.4"><path d="M0.6 4.8l3.6-3.6v2.2h4.4v3h-4.4v2.2z" fill="none" stroke="#d8d8d8" stroke-width="1"/><path d="M5.6 2.4l2.8-1.6v3.4" fill="#d8d8d8"/></svg>
<div class="a" style="left:0px;top:673.2px;width:1280px;height:12.8px;background:#1f1f1f;"></div>
<div class="a" style="left:0px;top:673.2px;width:1280px;height:1.2px;background:#171717;"></div>
<div class="a" style="left:576px;top:674.4px;width:704px;height:11.6px;background:linear-gradient(to right,#1f1f1f,#282828 40px,#282828);"></div>
<div class="a" style="left:0px;top:421px;width:2.2px;height:265px;background:#3e4e6e;"></div>
<svg class="a" style="left:6px;top:676px;" width="50" height="9" viewBox="0 0 50 9"><path d="M3.6 0.8l3 1.7v3.4l-3 1.7l-3-1.7v-3.4z" fill="none" stroke="#2f7fd8" stroke-width="1"/><path d="M3.6 4.2v3.4M0.6 2.5l3 1.7l3-1.7" fill="none" stroke="#2f7fd8" stroke-width="0.8"/><circle cx="16.2" cy="4.4" r="3.3" fill="none" stroke="#2f7fd8" stroke-width="1.1"/><path d="M14 6.4l4.4-4" stroke="#2f7fd8" stroke-width="1.6"/><path d="M25.4 1.2h5.2v2.4h-5.2zM26.6 3.6v4.4M29.4 3.6v4.4M25 5.6h6" fill="none" stroke="#a8a8a8" stroke-width="1"/><path d="M38.2 7.6v-4.4h2.4l0.8-1.4h2.2v5.8z" fill="#c8c8c8"/><path d="M43.6 4.4h2" stroke="#c8c8c8" stroke-width="1.2"/></svg>
<span class="t m" style="left:58.8px;top:676.12px;font-size:8.4px;line-height:8.4px;color:#b4b4b4;letter-spacing:0.45px;">帧渲染时间</span>
<span class="t" style="left:108px;top:676.37px;font-size:8.2px;color:#56b88a;line-height:9px;">0</span>
<span class="t m" style="left:112.96px;top:676.12px;font-size:8.4px;line-height:8.4px;color:#56b88a;letter-spacing:0.4px;">毫秒</span>
<svg class="a" style="left:504px;top:676.4px;" width="70" height="9" viewBox="0 0 70 9"><path d="M1 5.6l2.6-2.4l2.6 2.4z" fill="#bdbdbd"/><circle cx="18" cy="4.6" r="2.7" fill="#1f1f1f" stroke="#c4c4c4" stroke-width="1.2"/><path d="M21.4 4.6h25" stroke="#4a4a4a" stroke-width="1"/><path d="M54.6 7.4l3.6-4.6l2.2 2.6l2-3.4l3.4 5.4z" fill="#c8c8c8"/></svg>
<div class="a" style="left:1164px;top:669.8px;width:116px;height:16.2px;background:#ffffff;"></div>
<svg class="a" style="left:1143px;top:663px;" width="28" height="24" viewBox="0 0 28 24"><g transform="rotate(-9 14 14)"><rect x="4.6" y="4.4" width="19.6" height="20" rx="2.2" fill="#e9531d"/><path d="M19.4 9.6c-1.6-1.7-7.6-2.2-9.4 0.2c-1.7 2.4 0.9 4 4.3 4.5c3.6 0.5 5.8 1.7 4.6 3.9c-1.3 2.3-7.4 2.2-9.8 0.2" fill="none" stroke="#ffffff" stroke-width="2.7" stroke-linecap="round"/></g></svg>
<span class="t b" style="left:1171.6px;top:673.3px;font-size:9.8px;line-height:9.8px;color:#1b62b8;">中</span>
<svg class="a" style="left:1188.6px;top:672.6px;" width="90" height="12" viewBox="0 0 90 12"><circle cx="2" cy="3.4" r="1.3" fill="#1b62b8"/><path d="M6.4 6.4c0.8 0 1.2 0.6 1.2 1.4c0 1-0.6 2-1.6 2.6l-0.4-0.5c0.5-0.4 0.8-0.8 0.8-1.3c-0.5-0.1-0.8-0.5-0.8-1.1c0-0.6 0.4-1.1 0.8-1.1z" fill="#1b62b8"/><rect x="18.6" y="0.6" width="3.6" height="6.4" rx="1.8" fill="#1b62b8"/><path d="M16.8 4.6c0 2 1.4 3.6 3.6 3.6s3.6-1.6 3.6-3.6M20.4 8.2v2M18.6 10.4h3.6" fill="none" stroke="#1b62b8" stroke-width="1"/><rect x="31.4" y="1.8" width="9.6" height="7.6" rx="1" fill="none" stroke="#1b62b8" stroke-width="1.3"/><path d="M33 4.4h6.4M33 6.8h6.4" stroke="#1b62b8" stroke-width="1.2"/><path d="M49.6 1.2l-2.8 1.8l1.4 2.4l1-0.6v5h6v-5l1 0.6l1.4-2.4l-2.8-1.8c-0.6 1.2-3.4 1.2-4.2 0z" fill="#1b62b8"/><path d="M63.8 1.4h3.4v3.4h-3.4zM63.8 6.2h3.4v3.4h-3.4zM68.6 6.2h3.4v3.4h-3.4z" fill="#1b62b8"/><circle cx="70.4" cy="3" r="1.9" fill="#1b62b8"/><path d="M78.4 3.2l6-1.8l2 1.6l-1 3l-3.2 1.2l-2.4-1.2z" fill="#e07a28"/><path d="M82 6.4l2.8 3" stroke="#c9b98a" stroke-width="1.4"/></svg>
<svg class="a" style="left:670.6px;top:443px;" width="9" height="13" viewBox="0 0 9 13"><path d="M0.8 0.8v9.6l2.3-2.1l1.6 3.6l1.5-0.7l-1.6-3.5h3.1z" fill="#ffffff" stroke="#111" stroke-width="0.7"/></svg>
</div>
</body></html>
